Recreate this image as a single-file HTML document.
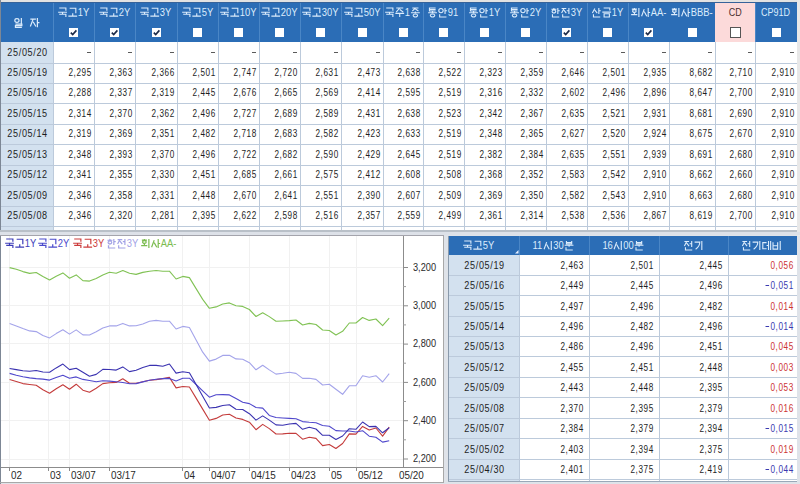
<!DOCTYPE html>
<html><head><meta charset="utf-8"><style>
html,body{margin:0;padding:0;width:800px;height:484px;overflow:hidden;background:#dcdcdc}
body{position:relative;font-family:"Liberation Sans",sans-serif;color:#1e1e1e}
body>div,body>svg{position:absolute}
.c{display:flex;align-items:center;white-space:nowrap;line-height:1;box-sizing:border-box}
.c span{display:inline-block}
</style></head><body>
<div style="left:0px;top:0px;width:800px;height:484px;background:#dfe3e9;"></div>
<div style="left:0px;top:0px;width:797px;height:2px;background:#e2e2e2;"></div>
<div style="left:0px;top:2px;width:797px;height:40px;background:#2b6db6;"></div>
<div style="left:0px;top:2px;width:797px;height:1px;background:#36639a;"></div>
<div style="left:715px;top:2.5px;width:40px;height:39.5px;background:#fcdada;"></div>
<div style="left:0px;top:42px;width:797px;height:188px;background:#ffffff;"></div>
<div style="left:0px;top:42px;width:53px;height:188px;background:#d3e1ef;"></div>
<div style="left:0px;top:62.55px;width:797px;height:1.0px;background:#bccadb;"></div>
<div style="left:0px;top:83.0px;width:797px;height:1.0px;background:#bccadb;"></div>
<div style="left:0px;top:103.44999999999999px;width:797px;height:1.0px;background:#bccadb;"></div>
<div style="left:0px;top:123.9px;width:797px;height:1.0px;background:#bccadb;"></div>
<div style="left:0px;top:144.35px;width:797px;height:1.0px;background:#bccadb;"></div>
<div style="left:0px;top:164.79999999999998px;width:797px;height:1.0px;background:#bccadb;"></div>
<div style="left:0px;top:185.25px;width:797px;height:1.0px;background:#bccadb;"></div>
<div style="left:0px;top:205.7px;width:797px;height:1.0px;background:#bccadb;"></div>
<div style="left:0px;top:226.14999999999998px;width:797px;height:1.0px;background:#bccadb;"></div>
<div style="left:53px;top:42px;width:1px;height:188px;background:#bccadb;"></div>
<div style="left:53px;top:2.5px;width:1px;height:39.5px;background:#4a86c6;"></div>
<div style="left:94px;top:42px;width:1px;height:188px;background:#bccadb;"></div>
<div style="left:94px;top:2.5px;width:1px;height:39.5px;background:#4a86c6;"></div>
<div style="left:135px;top:42px;width:1px;height:188px;background:#bccadb;"></div>
<div style="left:135px;top:2.5px;width:1px;height:39.5px;background:#4a86c6;"></div>
<div style="left:177px;top:42px;width:1px;height:188px;background:#bccadb;"></div>
<div style="left:177px;top:2.5px;width:1px;height:39.5px;background:#4a86c6;"></div>
<div style="left:218px;top:42px;width:1px;height:188px;background:#bccadb;"></div>
<div style="left:218px;top:2.5px;width:1px;height:39.5px;background:#4a86c6;"></div>
<div style="left:259px;top:42px;width:1px;height:188px;background:#bccadb;"></div>
<div style="left:259px;top:2.5px;width:1px;height:39.5px;background:#4a86c6;"></div>
<div style="left:300px;top:42px;width:1px;height:188px;background:#bccadb;"></div>
<div style="left:300px;top:2.5px;width:1px;height:39.5px;background:#4a86c6;"></div>
<div style="left:341px;top:42px;width:1px;height:188px;background:#bccadb;"></div>
<div style="left:341px;top:2.5px;width:1px;height:39.5px;background:#4a86c6;"></div>
<div style="left:383px;top:42px;width:1px;height:188px;background:#bccadb;"></div>
<div style="left:383px;top:2.5px;width:1px;height:39.5px;background:#4a86c6;"></div>
<div style="left:423px;top:42px;width:1px;height:188px;background:#bccadb;"></div>
<div style="left:423px;top:2.5px;width:1px;height:39.5px;background:#4a86c6;"></div>
<div style="left:464px;top:42px;width:1px;height:188px;background:#bccadb;"></div>
<div style="left:464px;top:2.5px;width:1px;height:39.5px;background:#4a86c6;"></div>
<div style="left:505px;top:42px;width:1px;height:188px;background:#bccadb;"></div>
<div style="left:505px;top:2.5px;width:1px;height:39.5px;background:#4a86c6;"></div>
<div style="left:546px;top:42px;width:1px;height:188px;background:#bccadb;"></div>
<div style="left:546px;top:2.5px;width:1px;height:39.5px;background:#4a86c6;"></div>
<div style="left:587px;top:42px;width:1px;height:188px;background:#bccadb;"></div>
<div style="left:587px;top:2.5px;width:1px;height:39.5px;background:#4a86c6;"></div>
<div style="left:628px;top:42px;width:1px;height:188px;background:#bccadb;"></div>
<div style="left:628px;top:2.5px;width:1px;height:39.5px;background:#4a86c6;"></div>
<div style="left:669px;top:42px;width:1px;height:188px;background:#bccadb;"></div>
<div style="left:715px;top:42px;width:1px;height:188px;background:#bccadb;"></div>
<div style="left:755px;top:42px;width:1px;height:188px;background:#bccadb;"></div>
<div style="left:755px;top:2.5px;width:1px;height:39.5px;background:#4a86c6;"></div>
<div style="left:797px;top:0px;width:3px;height:236px;background:#e8e8e8;"></div>
<div style="left:0px;top:0px;width:1px;height:230px;background:#7d8795;"></div>
<svg style="position:absolute;left:13.90px;top:17.70px;overflow:visible;color:#dcecfc" width="11.0" height="10.3" fill="none" stroke="currentColor" stroke-width="1.2" font-family="Liberation Sans, sans-serif"><path d="M0.82 2.42A2.1149999999999998 1.86 0 1 0 5.05 2.42A2.1149999999999998 1.86 0 1 0 0.82 2.42ZM7.34 0.00V5.95M1.44 6.14H7.86V7.720000000000001H1.44V9.3H7.86"/></svg>
<svg style="position:absolute;left:30.00px;top:17.70px;overflow:visible;color:#dcecfc" width="11.0" height="10.3" fill="none" stroke="currentColor" stroke-width="1.2" font-family="Liberation Sans, sans-serif"><path d="M0.34 1.12H5.89M3.1149999999999998 1.12L0.34 8.56M3.1149999999999998 3.724L5.89 8.56M7.39 0.00V9.30M7.39 4.65H9.46"/></svg>
<svg style="position:absolute;left:57.85px;top:8.40px;overflow:visible;color:#dcecfc" width="32.3" height="10.0" fill="none" stroke="currentColor" stroke-width="1.1" font-family="Liberation Sans, sans-serif"><path d="M1.2 0.0H7.88V2.7M0.14 4.23H8.94M4.54 4.23V5.76M1.2 6.3H7.88V9.0"/><path d="M11.66 0.27H17.82V5.22M10.34 8.10H19.14M14.74 5.22V8.10"/><text x="0" y="0" transform="translate(19.80 8.10) scale(0.84 1)" font-size="11.2" fill="currentColor" stroke="none">1Y</text></svg>
<div style="left:69.0px;top:28px;width:9px;height:9px;background:#fff"></div>
<svg style="position:absolute;left:69.0px;top:28px" width="9" height="9" viewBox="0 0 9 9"><path d="M1.8 4.6 L3.7 6.5 L7.4 2.4" stroke="#1c2a48" stroke-width="1.6" fill="none"/></svg>
<svg style="position:absolute;left:98.85px;top:8.40px;overflow:visible;color:#dcecfc" width="32.3" height="10.0" fill="none" stroke="currentColor" stroke-width="1.1" font-family="Liberation Sans, sans-serif"><path d="M1.2 0.0H7.88V2.7M0.14 4.23H8.94M4.54 4.23V5.76M1.2 6.3H7.88V9.0"/><path d="M11.66 0.27H17.82V5.22M10.34 8.10H19.14M14.74 5.22V8.10"/><text x="0" y="0" transform="translate(19.80 8.10) scale(0.84 1)" font-size="11.2" fill="currentColor" stroke="none">2Y</text></svg>
<div style="left:110.0px;top:28px;width:9px;height:9px;background:#fff"></div>
<svg style="position:absolute;left:110.0px;top:28px" width="9" height="9" viewBox="0 0 9 9"><path d="M1.8 4.6 L3.7 6.5 L7.4 2.4" stroke="#1c2a48" stroke-width="1.6" fill="none"/></svg>
<svg style="position:absolute;left:140.35px;top:8.40px;overflow:visible;color:#dcecfc" width="32.3" height="10.0" fill="none" stroke="currentColor" stroke-width="1.1" font-family="Liberation Sans, sans-serif"><path d="M1.2 0.0H7.88V2.7M0.14 4.23H8.94M4.54 4.23V5.76M1.2 6.3H7.88V9.0"/><path d="M11.66 0.27H17.82V5.22M10.34 8.10H19.14M14.74 5.22V8.10"/><text x="0" y="0" transform="translate(19.80 8.10) scale(0.84 1)" font-size="11.2" fill="currentColor" stroke="none">3Y</text></svg>
<div style="left:151.5px;top:28px;width:9px;height:9px;background:#fff"></div>
<svg style="position:absolute;left:151.5px;top:28px" width="9" height="9" viewBox="0 0 9 9"><path d="M1.8 4.6 L3.7 6.5 L7.4 2.4" stroke="#1c2a48" stroke-width="1.6" fill="none"/></svg>
<svg style="position:absolute;left:181.85px;top:8.40px;overflow:visible;color:#dcecfc" width="32.3" height="10.0" fill="none" stroke="currentColor" stroke-width="1.1" font-family="Liberation Sans, sans-serif"><path d="M1.2 0.0H7.88V2.7M0.14 4.23H8.94M4.54 4.23V5.76M1.2 6.3H7.88V9.0"/><path d="M11.66 0.27H17.82V5.22M10.34 8.10H19.14M14.74 5.22V8.10"/><text x="0" y="0" transform="translate(19.80 8.10) scale(0.84 1)" font-size="11.2" fill="currentColor" stroke="none">5Y</text></svg>
<div style="left:193.0px;top:28px;width:9px;height:9px;background:#fff"></div>
<svg style="position:absolute;left:220.23px;top:8.40px;overflow:visible;color:#dcecfc" width="37.5" height="10.0" fill="none" stroke="currentColor" stroke-width="1.1" font-family="Liberation Sans, sans-serif"><path d="M1.2 0.0H7.88V2.7M0.14 4.23H8.94M4.54 4.23V5.76M1.2 6.3H7.88V9.0"/><path d="M11.66 0.27H17.82V5.22M10.34 8.10H19.14M14.74 5.22V8.10"/><text x="0" y="0" transform="translate(19.80 8.10) scale(0.84 1)" font-size="11.2" fill="currentColor" stroke="none">10Y</text></svg>
<div style="left:234.0px;top:28px;width:9px;height:9px;background:#fff"></div>
<svg style="position:absolute;left:261.23px;top:8.40px;overflow:visible;color:#dcecfc" width="37.5" height="10.0" fill="none" stroke="currentColor" stroke-width="1.1" font-family="Liberation Sans, sans-serif"><path d="M1.2 0.0H7.88V2.7M0.14 4.23H8.94M4.54 4.23V5.76M1.2 6.3H7.88V9.0"/><path d="M11.66 0.27H17.82V5.22M10.34 8.10H19.14M14.74 5.22V8.10"/><text x="0" y="0" transform="translate(19.80 8.10) scale(0.84 1)" font-size="11.2" fill="currentColor" stroke="none">20Y</text></svg>
<div style="left:275.0px;top:28px;width:9px;height:9px;background:#fff"></div>
<svg style="position:absolute;left:302.23px;top:8.40px;overflow:visible;color:#dcecfc" width="37.5" height="10.0" fill="none" stroke="currentColor" stroke-width="1.1" font-family="Liberation Sans, sans-serif"><path d="M1.2 0.0H7.88V2.7M0.14 4.23H8.94M4.54 4.23V5.76M1.2 6.3H7.88V9.0"/><path d="M11.66 0.27H17.82V5.22M10.34 8.10H19.14M14.74 5.22V8.10"/><text x="0" y="0" transform="translate(19.80 8.10) scale(0.84 1)" font-size="11.2" fill="currentColor" stroke="none">30Y</text></svg>
<div style="left:316.0px;top:28px;width:9px;height:9px;background:#fff"></div>
<svg style="position:absolute;left:343.73px;top:8.40px;overflow:visible;color:#dcecfc" width="37.5" height="10.0" fill="none" stroke="currentColor" stroke-width="1.1" font-family="Liberation Sans, sans-serif"><path d="M1.2 0.0H7.88V2.7M0.14 4.23H8.94M4.54 4.23V5.76M1.2 6.3H7.88V9.0"/><path d="M11.66 0.27H17.82V5.22M10.34 8.10H19.14M14.74 5.22V8.10"/><text x="0" y="0" transform="translate(19.80 8.10) scale(0.84 1)" font-size="11.2" fill="currentColor" stroke="none">50Y</text></svg>
<div style="left:357.5px;top:28px;width:9px;height:9px;background:#fff"></div>
<svg style="position:absolute;left:384.98px;top:8.40px;overflow:visible;color:#dcecfc" width="37.0" height="10.0" fill="none" stroke="currentColor" stroke-width="1.1" font-family="Liberation Sans, sans-serif"><path d="M1.2 0.0H7.88V2.7M0.14 4.23H8.94M4.54 4.23V5.76M1.2 6.3H7.88V9.0"/><path d="M11.22 0.0H18.26M14.740000000000002 0.0L11.22 4.14M14.740000000000002 1.4489999999999998L18.26 4.14M10.34 5.40H19.14M14.74 5.40V9.00"/><text x="0" y="0" transform="translate(19.80 8.10) scale(0.84 1)" font-size="11.2" fill="currentColor" stroke="none">1</text><path d="M27.29 0.0H33.45M30.37 0.0L27.29 3.06M30.37 1.071L33.45 3.06M25.97 4.68H34.77M30.37 3.42V4.68M28.17 7.470000000000001A2.1999999999999993 1.5299999999999998 0 1 0 32.57 7.470000000000001A2.1999999999999993 1.5299999999999998 0 1 0 28.17 7.470000000000001Z"/></svg>
<div style="left:398.5px;top:28px;width:9px;height:9px;background:#fff"></div>
<svg style="position:absolute;left:428.37px;top:8.40px;overflow:visible;color:#dcecfc" width="31.3" height="10.0" fill="none" stroke="currentColor" stroke-width="1.1" font-family="Liberation Sans, sans-serif"><path d="M7.62 0.0H1.46V3.06H7.62M1.46 1.53H7.62M0.14 4.68H8.94M4.54 3.42V4.68M2.34 7.470000000000001A2.2 1.5299999999999998 0 1 0 6.74 7.470000000000001A2.2 1.5299999999999998 0 1 0 2.34 7.470000000000001Z"/><path d="M10.78 2.565A2.2 2.1149999999999998 0 1 0 15.18 2.565A2.2 2.1149999999999998 0 1 0 10.78 2.565ZM17.03 0.00V5.94M17.03 2.70H18.96M11.66 6.3V9.0H18.44"/><text x="0" y="0" transform="translate(19.80 8.10) scale(0.84 1)" font-size="11.2" fill="currentColor" stroke="none">91</text></svg>
<div style="left:439.0px;top:28px;width:9px;height:9px;background:#fff"></div>
<svg style="position:absolute;left:468.85px;top:8.40px;overflow:visible;color:#dcecfc" width="32.3" height="10.0" fill="none" stroke="currentColor" stroke-width="1.1" font-family="Liberation Sans, sans-serif"><path d="M7.62 0.0H1.46V3.06H7.62M1.46 1.53H7.62M0.14 4.68H8.94M4.54 3.42V4.68M2.34 7.470000000000001A2.2 1.5299999999999998 0 1 0 6.74 7.470000000000001A2.2 1.5299999999999998 0 1 0 2.34 7.470000000000001Z"/><path d="M10.78 2.565A2.2 2.1149999999999998 0 1 0 15.18 2.565A2.2 2.1149999999999998 0 1 0 10.78 2.565ZM17.03 0.00V5.94M17.03 2.70H18.96M11.66 6.3V9.0H18.44"/><text x="0" y="0" transform="translate(19.80 8.10) scale(0.84 1)" font-size="11.2" fill="currentColor" stroke="none">1Y</text></svg>
<div style="left:480.0px;top:28px;width:9px;height:9px;background:#fff"></div>
<svg style="position:absolute;left:509.85px;top:8.40px;overflow:visible;color:#dcecfc" width="32.3" height="10.0" fill="none" stroke="currentColor" stroke-width="1.1" font-family="Liberation Sans, sans-serif"><path d="M7.62 0.0H1.46V3.06H7.62M1.46 1.53H7.62M0.14 4.68H8.94M4.54 3.42V4.68M2.34 7.470000000000001A2.2 1.5299999999999998 0 1 0 6.74 7.470000000000001A2.2 1.5299999999999998 0 1 0 2.34 7.470000000000001Z"/><path d="M10.78 2.565A2.2 2.1149999999999998 0 1 0 15.18 2.565A2.2 2.1149999999999998 0 1 0 10.78 2.565ZM17.03 0.00V5.94M17.03 2.70H18.96M11.66 6.3V9.0H18.44"/><text x="0" y="0" transform="translate(19.80 8.10) scale(0.84 1)" font-size="11.2" fill="currentColor" stroke="none">2Y</text></svg>
<div style="left:521.0px;top:28px;width:9px;height:9px;background:#fff"></div>
<svg style="position:absolute;left:550.85px;top:8.40px;overflow:visible;color:#dcecfc" width="32.3" height="10.0" fill="none" stroke="currentColor" stroke-width="1.1" font-family="Liberation Sans, sans-serif"><path d="M2.91 0.0V0.9072M0.4 1.26H5.42M1.1028000000000004 3.4272000000000005A1.8071999999999997 1.512 0 1 0 4.7172 3.4272000000000005A1.8071999999999997 1.512 0 1 0 1.1028000000000004 3.4272000000000005ZM6.83 0.00V5.94M6.83 2.70H8.76M1.46 6.3V9.0H8.24"/><path d="M10.6 0.54H15.27M12.934999999999999 0.54L10.6 5.04M12.934999999999999 2.115L15.27 5.04M17.91 0.00V5.94M15.80 2.70H17.91M11.66 6.3V9.0H18.44"/><text x="0" y="0" transform="translate(19.80 8.10) scale(0.84 1)" font-size="11.2" fill="currentColor" stroke="none">3Y</text></svg>
<div style="left:562.0px;top:28px;width:9px;height:9px;background:#fff"></div>
<svg style="position:absolute;left:562.0px;top:28px" width="9" height="9" viewBox="0 0 9 9"><path d="M1.8 4.6 L3.7 6.5 L7.4 2.4" stroke="#1c2a48" stroke-width="1.6" fill="none"/></svg>
<svg style="position:absolute;left:591.85px;top:8.40px;overflow:visible;color:#dcecfc" width="32.3" height="10.0" fill="none" stroke="currentColor" stroke-width="1.1" font-family="Liberation Sans, sans-serif"><path d="M2.8200000000000003 0.54L0.4 5.04M2.8200000000000003 2.115L5.24 5.04M6.83 0.00V5.94M6.83 2.70H8.76M1.46 6.3V9.0H8.24"/><path d="M11.66 0.0H17.82V2.52M10.34 4.14H19.14M12.1 5.76H17.38V9.0H12.1Z"/><text x="0" y="0" transform="translate(19.80 8.10) scale(0.84 1)" font-size="11.2" fill="currentColor" stroke="none">1Y</text></svg>
<div style="left:603.0px;top:28px;width:9px;height:9px;background:#fff"></div>
<svg style="position:absolute;left:630.76px;top:8.40px;overflow:visible;color:#dcecfc" width="36.5" height="10.0" fill="none" stroke="currentColor" stroke-width="1.1" font-family="Liberation Sans, sans-serif"><path d="M3.395 0.0V0.8099999999999999M0.84 1.125H5.95M1.5554 3.06A1.8396000000000001 1.3499999999999999 0 1 0 5.2346 3.06A1.8396000000000001 1.3499999999999999 0 1 0 1.5554 3.06ZM0.14 6.66H6.30M3.40 5.04V6.66M7.88 0.00V9.00"/><path d="M13.2 1.08L10.6 8.28M13.2 3.5999999999999996L15.8 8.28M17.20 0.00V9.00M17.20 4.50H19.14"/><text x="0" y="0" transform="translate(19.80 8.10) scale(0.84 1)" font-size="11.2" fill="currentColor" stroke="none">AA-</text></svg>
<div style="left:644.0px;top:28px;width:9px;height:9px;background:#fff"></div>
<svg style="position:absolute;left:644.0px;top:28px" width="9" height="9" viewBox="0 0 9 9"><path d="M1.8 4.6 L3.7 6.5 L7.4 2.4" stroke="#1c2a48" stroke-width="1.6" fill="none"/></svg>
<svg style="position:absolute;left:671.12px;top:8.40px;overflow:visible;color:#dcecfc" width="42.8" height="10.0" fill="none" stroke="currentColor" stroke-width="1.1" font-family="Liberation Sans, sans-serif"><path d="M3.395 0.0V0.8099999999999999M0.84 1.125H5.95M1.5554 3.06A1.8396000000000001 1.3499999999999999 0 1 0 5.2346 3.06A1.8396000000000001 1.3499999999999999 0 1 0 1.5554 3.06ZM0.14 6.66H6.30M3.40 5.04V6.66M7.88 0.00V9.00"/><path d="M13.2 1.08L10.6 8.28M13.2 3.5999999999999996L15.8 8.28M17.20 0.00V9.00M17.20 4.50H19.14"/><text x="0" y="0" transform="translate(19.80 8.10) scale(0.84 1)" font-size="11.2" fill="currentColor" stroke="none">BBB-</text></svg>
<div style="left:687.5px;top:28px;width:9px;height:9px;background:#fff"></div>
<div class="c" style="left:715px;top:4px;width:40px;height:18px;justify-content:center;color:#4a3030;font-size:11.5px;"><span style="transform-origin:50% 50%;transform:scaleX(0.78);">CD</span></div>
<div style="left:730.0px;top:27px;width:9px;height:9px;background:#fff;border:1px solid #555"></div>
<div class="c" style="left:755px;top:4px;width:42px;height:18px;justify-content:center;color:#dcecfc;font-size:11.5px;"><span style="transform-origin:50% 50%;transform:scaleX(0.78);">CP91D</span></div>
<div style="left:771.5px;top:28px;width:9px;height:9px;background:#fff"></div>
<div class="c" style="left:1px;top:42.1px;width:53px;height:20.449999999999996px;justify-content:center;font-size:11.5px;"><span style="transform-origin:50% 50%;transform:scaleX(0.79);letter-spacing:0.8px;">25/05/20</span></div>
<div style="left:86.5px;top:52px;width:4.0px;height:1.3999999999999986px;background:#5a5a5a;"></div>
<div style="left:127.5px;top:52px;width:4.0px;height:1.3999999999999986px;background:#5a5a5a;"></div>
<div style="left:169.5px;top:52px;width:4.0px;height:1.3999999999999986px;background:#5a5a5a;"></div>
<div style="left:210.5px;top:52px;width:4.0px;height:1.3999999999999986px;background:#5a5a5a;"></div>
<div style="left:251.5px;top:52px;width:4.0px;height:1.3999999999999986px;background:#5a5a5a;"></div>
<div style="left:292.5px;top:52px;width:4.0px;height:1.3999999999999986px;background:#5a5a5a;"></div>
<div style="left:333.5px;top:52px;width:4.0px;height:1.3999999999999986px;background:#5a5a5a;"></div>
<div style="left:375.5px;top:52px;width:4.0px;height:1.3999999999999986px;background:#5a5a5a;"></div>
<div style="left:415.5px;top:52px;width:4.0px;height:1.3999999999999986px;background:#5a5a5a;"></div>
<div style="left:456.5px;top:52px;width:4.0px;height:1.3999999999999986px;background:#5a5a5a;"></div>
<div style="left:497.5px;top:52px;width:4.0px;height:1.3999999999999986px;background:#5a5a5a;"></div>
<div style="left:538.5px;top:52px;width:4.0px;height:1.3999999999999986px;background:#5a5a5a;"></div>
<div style="left:579.5px;top:52px;width:4.0px;height:1.3999999999999986px;background:#5a5a5a;"></div>
<div style="left:620.5px;top:52px;width:4.0px;height:1.3999999999999986px;background:#5a5a5a;"></div>
<div style="left:661.5px;top:52px;width:4.0px;height:1.3999999999999986px;background:#5a5a5a;"></div>
<div style="left:707.5px;top:52px;width:4.0px;height:1.3999999999999986px;background:#5a5a5a;"></div>
<div style="left:747.5px;top:52px;width:4.0px;height:1.3999999999999986px;background:#5a5a5a;"></div>
<div style="left:789.5px;top:52px;width:4.0px;height:1.3999999999999986px;background:#5a5a5a;"></div>
<div class="c" style="left:1px;top:62.55px;width:53px;height:20.450000000000003px;justify-content:center;font-size:11.5px;"><span style="transform-origin:50% 50%;transform:scaleX(0.79);letter-spacing:0.8px;">25/05/19</span></div>
<div class="c" style="left:53px;top:62.55px;width:41px;height:20.450000000000003px;justify-content:flex-end;padding-right:2.43px;font-size:11.5px;"><span style="transform-origin:100% 50%;transform:scaleX(0.71);letter-spacing:0.8px;">2,295</span></div>
<div class="c" style="left:94px;top:62.55px;width:41px;height:20.450000000000003px;justify-content:flex-end;padding-right:2.43px;font-size:11.5px;"><span style="transform-origin:100% 50%;transform:scaleX(0.71);letter-spacing:0.8px;">2,363</span></div>
<div class="c" style="left:135px;top:62.55px;width:42px;height:20.450000000000003px;justify-content:flex-end;padding-right:2.43px;font-size:11.5px;"><span style="transform-origin:100% 50%;transform:scaleX(0.71);letter-spacing:0.8px;">2,366</span></div>
<div class="c" style="left:177px;top:62.55px;width:41px;height:20.450000000000003px;justify-content:flex-end;padding-right:2.43px;font-size:11.5px;"><span style="transform-origin:100% 50%;transform:scaleX(0.71);letter-spacing:0.8px;">2,501</span></div>
<div class="c" style="left:218px;top:62.55px;width:41px;height:20.450000000000003px;justify-content:flex-end;padding-right:2.43px;font-size:11.5px;"><span style="transform-origin:100% 50%;transform:scaleX(0.71);letter-spacing:0.8px;">2,747</span></div>
<div class="c" style="left:259px;top:62.55px;width:41px;height:20.450000000000003px;justify-content:flex-end;padding-right:2.43px;font-size:11.5px;"><span style="transform-origin:100% 50%;transform:scaleX(0.71);letter-spacing:0.8px;">2,720</span></div>
<div class="c" style="left:300px;top:62.55px;width:41px;height:20.450000000000003px;justify-content:flex-end;padding-right:2.43px;font-size:11.5px;"><span style="transform-origin:100% 50%;transform:scaleX(0.71);letter-spacing:0.8px;">2,631</span></div>
<div class="c" style="left:341px;top:62.55px;width:42px;height:20.450000000000003px;justify-content:flex-end;padding-right:2.43px;font-size:11.5px;"><span style="transform-origin:100% 50%;transform:scaleX(0.71);letter-spacing:0.8px;">2,473</span></div>
<div class="c" style="left:383px;top:62.55px;width:40px;height:20.450000000000003px;justify-content:flex-end;padding-right:2.43px;font-size:11.5px;"><span style="transform-origin:100% 50%;transform:scaleX(0.71);letter-spacing:0.8px;">2,638</span></div>
<div class="c" style="left:423px;top:62.55px;width:41px;height:20.450000000000003px;justify-content:flex-end;padding-right:2.43px;font-size:11.5px;"><span style="transform-origin:100% 50%;transform:scaleX(0.71);letter-spacing:0.8px;">2,522</span></div>
<div class="c" style="left:464px;top:62.55px;width:41px;height:20.450000000000003px;justify-content:flex-end;padding-right:2.43px;font-size:11.5px;"><span style="transform-origin:100% 50%;transform:scaleX(0.71);letter-spacing:0.8px;">2,323</span></div>
<div class="c" style="left:505px;top:62.55px;width:41px;height:20.450000000000003px;justify-content:flex-end;padding-right:2.43px;font-size:11.5px;"><span style="transform-origin:100% 50%;transform:scaleX(0.71);letter-spacing:0.8px;">2,359</span></div>
<div class="c" style="left:546px;top:62.55px;width:41px;height:20.450000000000003px;justify-content:flex-end;padding-right:2.43px;font-size:11.5px;"><span style="transform-origin:100% 50%;transform:scaleX(0.71);letter-spacing:0.8px;">2,646</span></div>
<div class="c" style="left:587px;top:62.55px;width:41px;height:20.450000000000003px;justify-content:flex-end;padding-right:2.43px;font-size:11.5px;"><span style="transform-origin:100% 50%;transform:scaleX(0.71);letter-spacing:0.8px;">2,501</span></div>
<div class="c" style="left:628px;top:62.55px;width:41px;height:20.450000000000003px;justify-content:flex-end;padding-right:2.43px;font-size:11.5px;"><span style="transform-origin:100% 50%;transform:scaleX(0.71);letter-spacing:0.8px;">2,935</span></div>
<div class="c" style="left:669px;top:62.55px;width:46px;height:20.450000000000003px;justify-content:flex-end;padding-right:2.43px;font-size:11.5px;"><span style="transform-origin:100% 50%;transform:scaleX(0.71);letter-spacing:0.8px;">8,682</span></div>
<div class="c" style="left:715px;top:62.55px;width:40px;height:20.450000000000003px;justify-content:flex-end;padding-right:2.43px;font-size:11.5px;"><span style="transform-origin:100% 50%;transform:scaleX(0.71);letter-spacing:0.8px;">2,710</span></div>
<div class="c" style="left:755px;top:62.55px;width:42px;height:20.450000000000003px;justify-content:flex-end;padding-right:2.43px;font-size:11.5px;"><span style="transform-origin:100% 50%;transform:scaleX(0.71);letter-spacing:0.8px;">2,910</span></div>
<div class="c" style="left:1px;top:83.0px;width:53px;height:20.450000000000003px;justify-content:center;font-size:11.5px;"><span style="transform-origin:50% 50%;transform:scaleX(0.79);letter-spacing:0.8px;">25/05/16</span></div>
<div class="c" style="left:53px;top:83.0px;width:41px;height:20.450000000000003px;justify-content:flex-end;padding-right:2.43px;font-size:11.5px;"><span style="transform-origin:100% 50%;transform:scaleX(0.71);letter-spacing:0.8px;">2,288</span></div>
<div class="c" style="left:94px;top:83.0px;width:41px;height:20.450000000000003px;justify-content:flex-end;padding-right:2.43px;font-size:11.5px;"><span style="transform-origin:100% 50%;transform:scaleX(0.71);letter-spacing:0.8px;">2,337</span></div>
<div class="c" style="left:135px;top:83.0px;width:42px;height:20.450000000000003px;justify-content:flex-end;padding-right:2.43px;font-size:11.5px;"><span style="transform-origin:100% 50%;transform:scaleX(0.71);letter-spacing:0.8px;">2,319</span></div>
<div class="c" style="left:177px;top:83.0px;width:41px;height:20.450000000000003px;justify-content:flex-end;padding-right:2.43px;font-size:11.5px;"><span style="transform-origin:100% 50%;transform:scaleX(0.71);letter-spacing:0.8px;">2,445</span></div>
<div class="c" style="left:218px;top:83.0px;width:41px;height:20.450000000000003px;justify-content:flex-end;padding-right:2.43px;font-size:11.5px;"><span style="transform-origin:100% 50%;transform:scaleX(0.71);letter-spacing:0.8px;">2,676</span></div>
<div class="c" style="left:259px;top:83.0px;width:41px;height:20.450000000000003px;justify-content:flex-end;padding-right:2.43px;font-size:11.5px;"><span style="transform-origin:100% 50%;transform:scaleX(0.71);letter-spacing:0.8px;">2,665</span></div>
<div class="c" style="left:300px;top:83.0px;width:41px;height:20.450000000000003px;justify-content:flex-end;padding-right:2.43px;font-size:11.5px;"><span style="transform-origin:100% 50%;transform:scaleX(0.71);letter-spacing:0.8px;">2,569</span></div>
<div class="c" style="left:341px;top:83.0px;width:42px;height:20.450000000000003px;justify-content:flex-end;padding-right:2.43px;font-size:11.5px;"><span style="transform-origin:100% 50%;transform:scaleX(0.71);letter-spacing:0.8px;">2,414</span></div>
<div class="c" style="left:383px;top:83.0px;width:40px;height:20.450000000000003px;justify-content:flex-end;padding-right:2.43px;font-size:11.5px;"><span style="transform-origin:100% 50%;transform:scaleX(0.71);letter-spacing:0.8px;">2,595</span></div>
<div class="c" style="left:423px;top:83.0px;width:41px;height:20.450000000000003px;justify-content:flex-end;padding-right:2.43px;font-size:11.5px;"><span style="transform-origin:100% 50%;transform:scaleX(0.71);letter-spacing:0.8px;">2,519</span></div>
<div class="c" style="left:464px;top:83.0px;width:41px;height:20.450000000000003px;justify-content:flex-end;padding-right:2.43px;font-size:11.5px;"><span style="transform-origin:100% 50%;transform:scaleX(0.71);letter-spacing:0.8px;">2,316</span></div>
<div class="c" style="left:505px;top:83.0px;width:41px;height:20.450000000000003px;justify-content:flex-end;padding-right:2.43px;font-size:11.5px;"><span style="transform-origin:100% 50%;transform:scaleX(0.71);letter-spacing:0.8px;">2,332</span></div>
<div class="c" style="left:546px;top:83.0px;width:41px;height:20.450000000000003px;justify-content:flex-end;padding-right:2.43px;font-size:11.5px;"><span style="transform-origin:100% 50%;transform:scaleX(0.71);letter-spacing:0.8px;">2,602</span></div>
<div class="c" style="left:587px;top:83.0px;width:41px;height:20.450000000000003px;justify-content:flex-end;padding-right:2.43px;font-size:11.5px;"><span style="transform-origin:100% 50%;transform:scaleX(0.71);letter-spacing:0.8px;">2,496</span></div>
<div class="c" style="left:628px;top:83.0px;width:41px;height:20.450000000000003px;justify-content:flex-end;padding-right:2.43px;font-size:11.5px;"><span style="transform-origin:100% 50%;transform:scaleX(0.71);letter-spacing:0.8px;">2,896</span></div>
<div class="c" style="left:669px;top:83.0px;width:46px;height:20.450000000000003px;justify-content:flex-end;padding-right:2.43px;font-size:11.5px;"><span style="transform-origin:100% 50%;transform:scaleX(0.71);letter-spacing:0.8px;">8,647</span></div>
<div class="c" style="left:715px;top:83.0px;width:40px;height:20.450000000000003px;justify-content:flex-end;padding-right:2.43px;font-size:11.5px;"><span style="transform-origin:100% 50%;transform:scaleX(0.71);letter-spacing:0.8px;">2,700</span></div>
<div class="c" style="left:755px;top:83.0px;width:42px;height:20.450000000000003px;justify-content:flex-end;padding-right:2.43px;font-size:11.5px;"><span style="transform-origin:100% 50%;transform:scaleX(0.71);letter-spacing:0.8px;">2,910</span></div>
<div class="c" style="left:1px;top:103.44999999999999px;width:53px;height:20.450000000000003px;justify-content:center;font-size:11.5px;"><span style="transform-origin:50% 50%;transform:scaleX(0.79);letter-spacing:0.8px;">25/05/15</span></div>
<div class="c" style="left:53px;top:103.44999999999999px;width:41px;height:20.450000000000003px;justify-content:flex-end;padding-right:2.43px;font-size:11.5px;"><span style="transform-origin:100% 50%;transform:scaleX(0.71);letter-spacing:0.8px;">2,314</span></div>
<div class="c" style="left:94px;top:103.44999999999999px;width:41px;height:20.450000000000003px;justify-content:flex-end;padding-right:2.43px;font-size:11.5px;"><span style="transform-origin:100% 50%;transform:scaleX(0.71);letter-spacing:0.8px;">2,370</span></div>
<div class="c" style="left:135px;top:103.44999999999999px;width:42px;height:20.450000000000003px;justify-content:flex-end;padding-right:2.43px;font-size:11.5px;"><span style="transform-origin:100% 50%;transform:scaleX(0.71);letter-spacing:0.8px;">2,362</span></div>
<div class="c" style="left:177px;top:103.44999999999999px;width:41px;height:20.450000000000003px;justify-content:flex-end;padding-right:2.43px;font-size:11.5px;"><span style="transform-origin:100% 50%;transform:scaleX(0.71);letter-spacing:0.8px;">2,496</span></div>
<div class="c" style="left:218px;top:103.44999999999999px;width:41px;height:20.450000000000003px;justify-content:flex-end;padding-right:2.43px;font-size:11.5px;"><span style="transform-origin:100% 50%;transform:scaleX(0.71);letter-spacing:0.8px;">2,727</span></div>
<div class="c" style="left:259px;top:103.44999999999999px;width:41px;height:20.450000000000003px;justify-content:flex-end;padding-right:2.43px;font-size:11.5px;"><span style="transform-origin:100% 50%;transform:scaleX(0.71);letter-spacing:0.8px;">2,689</span></div>
<div class="c" style="left:300px;top:103.44999999999999px;width:41px;height:20.450000000000003px;justify-content:flex-end;padding-right:2.43px;font-size:11.5px;"><span style="transform-origin:100% 50%;transform:scaleX(0.71);letter-spacing:0.8px;">2,589</span></div>
<div class="c" style="left:341px;top:103.44999999999999px;width:42px;height:20.450000000000003px;justify-content:flex-end;padding-right:2.43px;font-size:11.5px;"><span style="transform-origin:100% 50%;transform:scaleX(0.71);letter-spacing:0.8px;">2,431</span></div>
<div class="c" style="left:383px;top:103.44999999999999px;width:40px;height:20.450000000000003px;justify-content:flex-end;padding-right:2.43px;font-size:11.5px;"><span style="transform-origin:100% 50%;transform:scaleX(0.71);letter-spacing:0.8px;">2,638</span></div>
<div class="c" style="left:423px;top:103.44999999999999px;width:41px;height:20.450000000000003px;justify-content:flex-end;padding-right:2.43px;font-size:11.5px;"><span style="transform-origin:100% 50%;transform:scaleX(0.71);letter-spacing:0.8px;">2,523</span></div>
<div class="c" style="left:464px;top:103.44999999999999px;width:41px;height:20.450000000000003px;justify-content:flex-end;padding-right:2.43px;font-size:11.5px;"><span style="transform-origin:100% 50%;transform:scaleX(0.71);letter-spacing:0.8px;">2,342</span></div>
<div class="c" style="left:505px;top:103.44999999999999px;width:41px;height:20.450000000000003px;justify-content:flex-end;padding-right:2.43px;font-size:11.5px;"><span style="transform-origin:100% 50%;transform:scaleX(0.71);letter-spacing:0.8px;">2,367</span></div>
<div class="c" style="left:546px;top:103.44999999999999px;width:41px;height:20.450000000000003px;justify-content:flex-end;padding-right:2.43px;font-size:11.5px;"><span style="transform-origin:100% 50%;transform:scaleX(0.71);letter-spacing:0.8px;">2,635</span></div>
<div class="c" style="left:587px;top:103.44999999999999px;width:41px;height:20.450000000000003px;justify-content:flex-end;padding-right:2.43px;font-size:11.5px;"><span style="transform-origin:100% 50%;transform:scaleX(0.71);letter-spacing:0.8px;">2,521</span></div>
<div class="c" style="left:628px;top:103.44999999999999px;width:41px;height:20.450000000000003px;justify-content:flex-end;padding-right:2.43px;font-size:11.5px;"><span style="transform-origin:100% 50%;transform:scaleX(0.71);letter-spacing:0.8px;">2,931</span></div>
<div class="c" style="left:669px;top:103.44999999999999px;width:46px;height:20.450000000000003px;justify-content:flex-end;padding-right:2.43px;font-size:11.5px;"><span style="transform-origin:100% 50%;transform:scaleX(0.71);letter-spacing:0.8px;">8,681</span></div>
<div class="c" style="left:715px;top:103.44999999999999px;width:40px;height:20.450000000000003px;justify-content:flex-end;padding-right:2.43px;font-size:11.5px;"><span style="transform-origin:100% 50%;transform:scaleX(0.71);letter-spacing:0.8px;">2,690</span></div>
<div class="c" style="left:755px;top:103.44999999999999px;width:42px;height:20.450000000000003px;justify-content:flex-end;padding-right:2.43px;font-size:11.5px;"><span style="transform-origin:100% 50%;transform:scaleX(0.71);letter-spacing:0.8px;">2,910</span></div>
<div class="c" style="left:1px;top:123.9px;width:53px;height:20.44999999999999px;justify-content:center;font-size:11.5px;"><span style="transform-origin:50% 50%;transform:scaleX(0.79);letter-spacing:0.8px;">25/05/14</span></div>
<div class="c" style="left:53px;top:123.9px;width:41px;height:20.44999999999999px;justify-content:flex-end;padding-right:2.43px;font-size:11.5px;"><span style="transform-origin:100% 50%;transform:scaleX(0.71);letter-spacing:0.8px;">2,319</span></div>
<div class="c" style="left:94px;top:123.9px;width:41px;height:20.44999999999999px;justify-content:flex-end;padding-right:2.43px;font-size:11.5px;"><span style="transform-origin:100% 50%;transform:scaleX(0.71);letter-spacing:0.8px;">2,369</span></div>
<div class="c" style="left:135px;top:123.9px;width:42px;height:20.44999999999999px;justify-content:flex-end;padding-right:2.43px;font-size:11.5px;"><span style="transform-origin:100% 50%;transform:scaleX(0.71);letter-spacing:0.8px;">2,351</span></div>
<div class="c" style="left:177px;top:123.9px;width:41px;height:20.44999999999999px;justify-content:flex-end;padding-right:2.43px;font-size:11.5px;"><span style="transform-origin:100% 50%;transform:scaleX(0.71);letter-spacing:0.8px;">2,482</span></div>
<div class="c" style="left:218px;top:123.9px;width:41px;height:20.44999999999999px;justify-content:flex-end;padding-right:2.43px;font-size:11.5px;"><span style="transform-origin:100% 50%;transform:scaleX(0.71);letter-spacing:0.8px;">2,718</span></div>
<div class="c" style="left:259px;top:123.9px;width:41px;height:20.44999999999999px;justify-content:flex-end;padding-right:2.43px;font-size:11.5px;"><span style="transform-origin:100% 50%;transform:scaleX(0.71);letter-spacing:0.8px;">2,683</span></div>
<div class="c" style="left:300px;top:123.9px;width:41px;height:20.44999999999999px;justify-content:flex-end;padding-right:2.43px;font-size:11.5px;"><span style="transform-origin:100% 50%;transform:scaleX(0.71);letter-spacing:0.8px;">2,582</span></div>
<div class="c" style="left:341px;top:123.9px;width:42px;height:20.44999999999999px;justify-content:flex-end;padding-right:2.43px;font-size:11.5px;"><span style="transform-origin:100% 50%;transform:scaleX(0.71);letter-spacing:0.8px;">2,423</span></div>
<div class="c" style="left:383px;top:123.9px;width:40px;height:20.44999999999999px;justify-content:flex-end;padding-right:2.43px;font-size:11.5px;"><span style="transform-origin:100% 50%;transform:scaleX(0.71);letter-spacing:0.8px;">2,633</span></div>
<div class="c" style="left:423px;top:123.9px;width:41px;height:20.44999999999999px;justify-content:flex-end;padding-right:2.43px;font-size:11.5px;"><span style="transform-origin:100% 50%;transform:scaleX(0.71);letter-spacing:0.8px;">2,519</span></div>
<div class="c" style="left:464px;top:123.9px;width:41px;height:20.44999999999999px;justify-content:flex-end;padding-right:2.43px;font-size:11.5px;"><span style="transform-origin:100% 50%;transform:scaleX(0.71);letter-spacing:0.8px;">2,348</span></div>
<div class="c" style="left:505px;top:123.9px;width:41px;height:20.44999999999999px;justify-content:flex-end;padding-right:2.43px;font-size:11.5px;"><span style="transform-origin:100% 50%;transform:scaleX(0.71);letter-spacing:0.8px;">2,365</span></div>
<div class="c" style="left:546px;top:123.9px;width:41px;height:20.44999999999999px;justify-content:flex-end;padding-right:2.43px;font-size:11.5px;"><span style="transform-origin:100% 50%;transform:scaleX(0.71);letter-spacing:0.8px;">2,627</span></div>
<div class="c" style="left:587px;top:123.9px;width:41px;height:20.44999999999999px;justify-content:flex-end;padding-right:2.43px;font-size:11.5px;"><span style="transform-origin:100% 50%;transform:scaleX(0.71);letter-spacing:0.8px;">2,520</span></div>
<div class="c" style="left:628px;top:123.9px;width:41px;height:20.44999999999999px;justify-content:flex-end;padding-right:2.43px;font-size:11.5px;"><span style="transform-origin:100% 50%;transform:scaleX(0.71);letter-spacing:0.8px;">2,924</span></div>
<div class="c" style="left:669px;top:123.9px;width:46px;height:20.44999999999999px;justify-content:flex-end;padding-right:2.43px;font-size:11.5px;"><span style="transform-origin:100% 50%;transform:scaleX(0.71);letter-spacing:0.8px;">8,675</span></div>
<div class="c" style="left:715px;top:123.9px;width:40px;height:20.44999999999999px;justify-content:flex-end;padding-right:2.43px;font-size:11.5px;"><span style="transform-origin:100% 50%;transform:scaleX(0.71);letter-spacing:0.8px;">2,670</span></div>
<div class="c" style="left:755px;top:123.9px;width:42px;height:20.44999999999999px;justify-content:flex-end;padding-right:2.43px;font-size:11.5px;"><span style="transform-origin:100% 50%;transform:scaleX(0.71);letter-spacing:0.8px;">2,910</span></div>
<div class="c" style="left:1px;top:144.35px;width:53px;height:20.44999999999999px;justify-content:center;font-size:11.5px;"><span style="transform-origin:50% 50%;transform:scaleX(0.79);letter-spacing:0.8px;">25/05/13</span></div>
<div class="c" style="left:53px;top:144.35px;width:41px;height:20.44999999999999px;justify-content:flex-end;padding-right:2.43px;font-size:11.5px;"><span style="transform-origin:100% 50%;transform:scaleX(0.71);letter-spacing:0.8px;">2,348</span></div>
<div class="c" style="left:94px;top:144.35px;width:41px;height:20.44999999999999px;justify-content:flex-end;padding-right:2.43px;font-size:11.5px;"><span style="transform-origin:100% 50%;transform:scaleX(0.71);letter-spacing:0.8px;">2,393</span></div>
<div class="c" style="left:135px;top:144.35px;width:42px;height:20.44999999999999px;justify-content:flex-end;padding-right:2.43px;font-size:11.5px;"><span style="transform-origin:100% 50%;transform:scaleX(0.71);letter-spacing:0.8px;">2,370</span></div>
<div class="c" style="left:177px;top:144.35px;width:41px;height:20.44999999999999px;justify-content:flex-end;padding-right:2.43px;font-size:11.5px;"><span style="transform-origin:100% 50%;transform:scaleX(0.71);letter-spacing:0.8px;">2,496</span></div>
<div class="c" style="left:218px;top:144.35px;width:41px;height:20.44999999999999px;justify-content:flex-end;padding-right:2.43px;font-size:11.5px;"><span style="transform-origin:100% 50%;transform:scaleX(0.71);letter-spacing:0.8px;">2,722</span></div>
<div class="c" style="left:259px;top:144.35px;width:41px;height:20.44999999999999px;justify-content:flex-end;padding-right:2.43px;font-size:11.5px;"><span style="transform-origin:100% 50%;transform:scaleX(0.71);letter-spacing:0.8px;">2,682</span></div>
<div class="c" style="left:300px;top:144.35px;width:41px;height:20.44999999999999px;justify-content:flex-end;padding-right:2.43px;font-size:11.5px;"><span style="transform-origin:100% 50%;transform:scaleX(0.71);letter-spacing:0.8px;">2,590</span></div>
<div class="c" style="left:341px;top:144.35px;width:42px;height:20.44999999999999px;justify-content:flex-end;padding-right:2.43px;font-size:11.5px;"><span style="transform-origin:100% 50%;transform:scaleX(0.71);letter-spacing:0.8px;">2,429</span></div>
<div class="c" style="left:383px;top:144.35px;width:40px;height:20.44999999999999px;justify-content:flex-end;padding-right:2.43px;font-size:11.5px;"><span style="transform-origin:100% 50%;transform:scaleX(0.71);letter-spacing:0.8px;">2,645</span></div>
<div class="c" style="left:423px;top:144.35px;width:41px;height:20.44999999999999px;justify-content:flex-end;padding-right:2.43px;font-size:11.5px;"><span style="transform-origin:100% 50%;transform:scaleX(0.71);letter-spacing:0.8px;">2,519</span></div>
<div class="c" style="left:464px;top:144.35px;width:41px;height:20.44999999999999px;justify-content:flex-end;padding-right:2.43px;font-size:11.5px;"><span style="transform-origin:100% 50%;transform:scaleX(0.71);letter-spacing:0.8px;">2,382</span></div>
<div class="c" style="left:505px;top:144.35px;width:41px;height:20.44999999999999px;justify-content:flex-end;padding-right:2.43px;font-size:11.5px;"><span style="transform-origin:100% 50%;transform:scaleX(0.71);letter-spacing:0.8px;">2,384</span></div>
<div class="c" style="left:546px;top:144.35px;width:41px;height:20.44999999999999px;justify-content:flex-end;padding-right:2.43px;font-size:11.5px;"><span style="transform-origin:100% 50%;transform:scaleX(0.71);letter-spacing:0.8px;">2,635</span></div>
<div class="c" style="left:587px;top:144.35px;width:41px;height:20.44999999999999px;justify-content:flex-end;padding-right:2.43px;font-size:11.5px;"><span style="transform-origin:100% 50%;transform:scaleX(0.71);letter-spacing:0.8px;">2,551</span></div>
<div class="c" style="left:628px;top:144.35px;width:41px;height:20.44999999999999px;justify-content:flex-end;padding-right:2.43px;font-size:11.5px;"><span style="transform-origin:100% 50%;transform:scaleX(0.71);letter-spacing:0.8px;">2,939</span></div>
<div class="c" style="left:669px;top:144.35px;width:46px;height:20.44999999999999px;justify-content:flex-end;padding-right:2.43px;font-size:11.5px;"><span style="transform-origin:100% 50%;transform:scaleX(0.71);letter-spacing:0.8px;">8,691</span></div>
<div class="c" style="left:715px;top:144.35px;width:40px;height:20.44999999999999px;justify-content:flex-end;padding-right:2.43px;font-size:11.5px;"><span style="transform-origin:100% 50%;transform:scaleX(0.71);letter-spacing:0.8px;">2,680</span></div>
<div class="c" style="left:755px;top:144.35px;width:42px;height:20.44999999999999px;justify-content:flex-end;padding-right:2.43px;font-size:11.5px;"><span style="transform-origin:100% 50%;transform:scaleX(0.71);letter-spacing:0.8px;">2,910</span></div>
<div class="c" style="left:1px;top:164.79999999999998px;width:53px;height:20.44999999999999px;justify-content:center;font-size:11.5px;"><span style="transform-origin:50% 50%;transform:scaleX(0.79);letter-spacing:0.8px;">25/05/12</span></div>
<div class="c" style="left:53px;top:164.79999999999998px;width:41px;height:20.44999999999999px;justify-content:flex-end;padding-right:2.43px;font-size:11.5px;"><span style="transform-origin:100% 50%;transform:scaleX(0.71);letter-spacing:0.8px;">2,341</span></div>
<div class="c" style="left:94px;top:164.79999999999998px;width:41px;height:20.44999999999999px;justify-content:flex-end;padding-right:2.43px;font-size:11.5px;"><span style="transform-origin:100% 50%;transform:scaleX(0.71);letter-spacing:0.8px;">2,355</span></div>
<div class="c" style="left:135px;top:164.79999999999998px;width:42px;height:20.44999999999999px;justify-content:flex-end;padding-right:2.43px;font-size:11.5px;"><span style="transform-origin:100% 50%;transform:scaleX(0.71);letter-spacing:0.8px;">2,330</span></div>
<div class="c" style="left:177px;top:164.79999999999998px;width:41px;height:20.44999999999999px;justify-content:flex-end;padding-right:2.43px;font-size:11.5px;"><span style="transform-origin:100% 50%;transform:scaleX(0.71);letter-spacing:0.8px;">2,451</span></div>
<div class="c" style="left:218px;top:164.79999999999998px;width:41px;height:20.44999999999999px;justify-content:flex-end;padding-right:2.43px;font-size:11.5px;"><span style="transform-origin:100% 50%;transform:scaleX(0.71);letter-spacing:0.8px;">2,685</span></div>
<div class="c" style="left:259px;top:164.79999999999998px;width:41px;height:20.44999999999999px;justify-content:flex-end;padding-right:2.43px;font-size:11.5px;"><span style="transform-origin:100% 50%;transform:scaleX(0.71);letter-spacing:0.8px;">2,661</span></div>
<div class="c" style="left:300px;top:164.79999999999998px;width:41px;height:20.44999999999999px;justify-content:flex-end;padding-right:2.43px;font-size:11.5px;"><span style="transform-origin:100% 50%;transform:scaleX(0.71);letter-spacing:0.8px;">2,575</span></div>
<div class="c" style="left:341px;top:164.79999999999998px;width:42px;height:20.44999999999999px;justify-content:flex-end;padding-right:2.43px;font-size:11.5px;"><span style="transform-origin:100% 50%;transform:scaleX(0.71);letter-spacing:0.8px;">2,412</span></div>
<div class="c" style="left:383px;top:164.79999999999998px;width:40px;height:20.44999999999999px;justify-content:flex-end;padding-right:2.43px;font-size:11.5px;"><span style="transform-origin:100% 50%;transform:scaleX(0.71);letter-spacing:0.8px;">2,608</span></div>
<div class="c" style="left:423px;top:164.79999999999998px;width:41px;height:20.44999999999999px;justify-content:flex-end;padding-right:2.43px;font-size:11.5px;"><span style="transform-origin:100% 50%;transform:scaleX(0.71);letter-spacing:0.8px;">2,508</span></div>
<div class="c" style="left:464px;top:164.79999999999998px;width:41px;height:20.44999999999999px;justify-content:flex-end;padding-right:2.43px;font-size:11.5px;"><span style="transform-origin:100% 50%;transform:scaleX(0.71);letter-spacing:0.8px;">2,368</span></div>
<div class="c" style="left:505px;top:164.79999999999998px;width:41px;height:20.44999999999999px;justify-content:flex-end;padding-right:2.43px;font-size:11.5px;"><span style="transform-origin:100% 50%;transform:scaleX(0.71);letter-spacing:0.8px;">2,352</span></div>
<div class="c" style="left:546px;top:164.79999999999998px;width:41px;height:20.44999999999999px;justify-content:flex-end;padding-right:2.43px;font-size:11.5px;"><span style="transform-origin:100% 50%;transform:scaleX(0.71);letter-spacing:0.8px;">2,583</span></div>
<div class="c" style="left:587px;top:164.79999999999998px;width:41px;height:20.44999999999999px;justify-content:flex-end;padding-right:2.43px;font-size:11.5px;"><span style="transform-origin:100% 50%;transform:scaleX(0.71);letter-spacing:0.8px;">2,542</span></div>
<div class="c" style="left:628px;top:164.79999999999998px;width:41px;height:20.44999999999999px;justify-content:flex-end;padding-right:2.43px;font-size:11.5px;"><span style="transform-origin:100% 50%;transform:scaleX(0.71);letter-spacing:0.8px;">2,910</span></div>
<div class="c" style="left:669px;top:164.79999999999998px;width:46px;height:20.44999999999999px;justify-content:flex-end;padding-right:2.43px;font-size:11.5px;"><span style="transform-origin:100% 50%;transform:scaleX(0.71);letter-spacing:0.8px;">8,662</span></div>
<div class="c" style="left:715px;top:164.79999999999998px;width:40px;height:20.44999999999999px;justify-content:flex-end;padding-right:2.43px;font-size:11.5px;"><span style="transform-origin:100% 50%;transform:scaleX(0.71);letter-spacing:0.8px;">2,660</span></div>
<div class="c" style="left:755px;top:164.79999999999998px;width:42px;height:20.44999999999999px;justify-content:flex-end;padding-right:2.43px;font-size:11.5px;"><span style="transform-origin:100% 50%;transform:scaleX(0.71);letter-spacing:0.8px;">2,910</span></div>
<div class="c" style="left:1px;top:185.25px;width:53px;height:20.44999999999999px;justify-content:center;font-size:11.5px;"><span style="transform-origin:50% 50%;transform:scaleX(0.79);letter-spacing:0.8px;">25/05/09</span></div>
<div class="c" style="left:53px;top:185.25px;width:41px;height:20.44999999999999px;justify-content:flex-end;padding-right:2.43px;font-size:11.5px;"><span style="transform-origin:100% 50%;transform:scaleX(0.71);letter-spacing:0.8px;">2,346</span></div>
<div class="c" style="left:94px;top:185.25px;width:41px;height:20.44999999999999px;justify-content:flex-end;padding-right:2.43px;font-size:11.5px;"><span style="transform-origin:100% 50%;transform:scaleX(0.71);letter-spacing:0.8px;">2,358</span></div>
<div class="c" style="left:135px;top:185.25px;width:42px;height:20.44999999999999px;justify-content:flex-end;padding-right:2.43px;font-size:11.5px;"><span style="transform-origin:100% 50%;transform:scaleX(0.71);letter-spacing:0.8px;">2,331</span></div>
<div class="c" style="left:177px;top:185.25px;width:41px;height:20.44999999999999px;justify-content:flex-end;padding-right:2.43px;font-size:11.5px;"><span style="transform-origin:100% 50%;transform:scaleX(0.71);letter-spacing:0.8px;">2,448</span></div>
<div class="c" style="left:218px;top:185.25px;width:41px;height:20.44999999999999px;justify-content:flex-end;padding-right:2.43px;font-size:11.5px;"><span style="transform-origin:100% 50%;transform:scaleX(0.71);letter-spacing:0.8px;">2,670</span></div>
<div class="c" style="left:259px;top:185.25px;width:41px;height:20.44999999999999px;justify-content:flex-end;padding-right:2.43px;font-size:11.5px;"><span style="transform-origin:100% 50%;transform:scaleX(0.71);letter-spacing:0.8px;">2,641</span></div>
<div class="c" style="left:300px;top:185.25px;width:41px;height:20.44999999999999px;justify-content:flex-end;padding-right:2.43px;font-size:11.5px;"><span style="transform-origin:100% 50%;transform:scaleX(0.71);letter-spacing:0.8px;">2,551</span></div>
<div class="c" style="left:341px;top:185.25px;width:42px;height:20.44999999999999px;justify-content:flex-end;padding-right:2.43px;font-size:11.5px;"><span style="transform-origin:100% 50%;transform:scaleX(0.71);letter-spacing:0.8px;">2,390</span></div>
<div class="c" style="left:383px;top:185.25px;width:40px;height:20.44999999999999px;justify-content:flex-end;padding-right:2.43px;font-size:11.5px;"><span style="transform-origin:100% 50%;transform:scaleX(0.71);letter-spacing:0.8px;">2,607</span></div>
<div class="c" style="left:423px;top:185.25px;width:41px;height:20.44999999999999px;justify-content:flex-end;padding-right:2.43px;font-size:11.5px;"><span style="transform-origin:100% 50%;transform:scaleX(0.71);letter-spacing:0.8px;">2,509</span></div>
<div class="c" style="left:464px;top:185.25px;width:41px;height:20.44999999999999px;justify-content:flex-end;padding-right:2.43px;font-size:11.5px;"><span style="transform-origin:100% 50%;transform:scaleX(0.71);letter-spacing:0.8px;">2,369</span></div>
<div class="c" style="left:505px;top:185.25px;width:41px;height:20.44999999999999px;justify-content:flex-end;padding-right:2.43px;font-size:11.5px;"><span style="transform-origin:100% 50%;transform:scaleX(0.71);letter-spacing:0.8px;">2,350</span></div>
<div class="c" style="left:546px;top:185.25px;width:41px;height:20.44999999999999px;justify-content:flex-end;padding-right:2.43px;font-size:11.5px;"><span style="transform-origin:100% 50%;transform:scaleX(0.71);letter-spacing:0.8px;">2,582</span></div>
<div class="c" style="left:587px;top:185.25px;width:41px;height:20.44999999999999px;justify-content:flex-end;padding-right:2.43px;font-size:11.5px;"><span style="transform-origin:100% 50%;transform:scaleX(0.71);letter-spacing:0.8px;">2,543</span></div>
<div class="c" style="left:628px;top:185.25px;width:41px;height:20.44999999999999px;justify-content:flex-end;padding-right:2.43px;font-size:11.5px;"><span style="transform-origin:100% 50%;transform:scaleX(0.71);letter-spacing:0.8px;">2,910</span></div>
<div class="c" style="left:669px;top:185.25px;width:46px;height:20.44999999999999px;justify-content:flex-end;padding-right:2.43px;font-size:11.5px;"><span style="transform-origin:100% 50%;transform:scaleX(0.71);letter-spacing:0.8px;">8,663</span></div>
<div class="c" style="left:715px;top:185.25px;width:40px;height:20.44999999999999px;justify-content:flex-end;padding-right:2.43px;font-size:11.5px;"><span style="transform-origin:100% 50%;transform:scaleX(0.71);letter-spacing:0.8px;">2,680</span></div>
<div class="c" style="left:755px;top:185.25px;width:42px;height:20.44999999999999px;justify-content:flex-end;padding-right:2.43px;font-size:11.5px;"><span style="transform-origin:100% 50%;transform:scaleX(0.71);letter-spacing:0.8px;">2,910</span></div>
<div class="c" style="left:1px;top:205.7px;width:53px;height:20.44999999999999px;justify-content:center;font-size:11.5px;"><span style="transform-origin:50% 50%;transform:scaleX(0.79);letter-spacing:0.8px;">25/05/08</span></div>
<div class="c" style="left:53px;top:205.7px;width:41px;height:20.44999999999999px;justify-content:flex-end;padding-right:2.43px;font-size:11.5px;"><span style="transform-origin:100% 50%;transform:scaleX(0.71);letter-spacing:0.8px;">2,346</span></div>
<div class="c" style="left:94px;top:205.7px;width:41px;height:20.44999999999999px;justify-content:flex-end;padding-right:2.43px;font-size:11.5px;"><span style="transform-origin:100% 50%;transform:scaleX(0.71);letter-spacing:0.8px;">2,320</span></div>
<div class="c" style="left:135px;top:205.7px;width:42px;height:20.44999999999999px;justify-content:flex-end;padding-right:2.43px;font-size:11.5px;"><span style="transform-origin:100% 50%;transform:scaleX(0.71);letter-spacing:0.8px;">2,281</span></div>
<div class="c" style="left:177px;top:205.7px;width:41px;height:20.44999999999999px;justify-content:flex-end;padding-right:2.43px;font-size:11.5px;"><span style="transform-origin:100% 50%;transform:scaleX(0.71);letter-spacing:0.8px;">2,395</span></div>
<div class="c" style="left:218px;top:205.7px;width:41px;height:20.44999999999999px;justify-content:flex-end;padding-right:2.43px;font-size:11.5px;"><span style="transform-origin:100% 50%;transform:scaleX(0.71);letter-spacing:0.8px;">2,622</span></div>
<div class="c" style="left:259px;top:205.7px;width:41px;height:20.44999999999999px;justify-content:flex-end;padding-right:2.43px;font-size:11.5px;"><span style="transform-origin:100% 50%;transform:scaleX(0.71);letter-spacing:0.8px;">2,598</span></div>
<div class="c" style="left:300px;top:205.7px;width:41px;height:20.44999999999999px;justify-content:flex-end;padding-right:2.43px;font-size:11.5px;"><span style="transform-origin:100% 50%;transform:scaleX(0.71);letter-spacing:0.8px;">2,516</span></div>
<div class="c" style="left:341px;top:205.7px;width:42px;height:20.44999999999999px;justify-content:flex-end;padding-right:2.43px;font-size:11.5px;"><span style="transform-origin:100% 50%;transform:scaleX(0.71);letter-spacing:0.8px;">2,357</span></div>
<div class="c" style="left:383px;top:205.7px;width:40px;height:20.44999999999999px;justify-content:flex-end;padding-right:2.43px;font-size:11.5px;"><span style="transform-origin:100% 50%;transform:scaleX(0.71);letter-spacing:0.8px;">2,559</span></div>
<div class="c" style="left:423px;top:205.7px;width:41px;height:20.44999999999999px;justify-content:flex-end;padding-right:2.43px;font-size:11.5px;"><span style="transform-origin:100% 50%;transform:scaleX(0.71);letter-spacing:0.8px;">2,499</span></div>
<div class="c" style="left:464px;top:205.7px;width:41px;height:20.44999999999999px;justify-content:flex-end;padding-right:2.43px;font-size:11.5px;"><span style="transform-origin:100% 50%;transform:scaleX(0.71);letter-spacing:0.8px;">2,361</span></div>
<div class="c" style="left:505px;top:205.7px;width:41px;height:20.44999999999999px;justify-content:flex-end;padding-right:2.43px;font-size:11.5px;"><span style="transform-origin:100% 50%;transform:scaleX(0.71);letter-spacing:0.8px;">2,314</span></div>
<div class="c" style="left:546px;top:205.7px;width:41px;height:20.44999999999999px;justify-content:flex-end;padding-right:2.43px;font-size:11.5px;"><span style="transform-origin:100% 50%;transform:scaleX(0.71);letter-spacing:0.8px;">2,538</span></div>
<div class="c" style="left:587px;top:205.7px;width:41px;height:20.44999999999999px;justify-content:flex-end;padding-right:2.43px;font-size:11.5px;"><span style="transform-origin:100% 50%;transform:scaleX(0.71);letter-spacing:0.8px;">2,536</span></div>
<div class="c" style="left:628px;top:205.7px;width:41px;height:20.44999999999999px;justify-content:flex-end;padding-right:2.43px;font-size:11.5px;"><span style="transform-origin:100% 50%;transform:scaleX(0.71);letter-spacing:0.8px;">2,867</span></div>
<div class="c" style="left:669px;top:205.7px;width:46px;height:20.44999999999999px;justify-content:flex-end;padding-right:2.43px;font-size:11.5px;"><span style="transform-origin:100% 50%;transform:scaleX(0.71);letter-spacing:0.8px;">8,619</span></div>
<div class="c" style="left:715px;top:205.7px;width:40px;height:20.44999999999999px;justify-content:flex-end;padding-right:2.43px;font-size:11.5px;"><span style="transform-origin:100% 50%;transform:scaleX(0.71);letter-spacing:0.8px;">2,700</span></div>
<div class="c" style="left:755px;top:205.7px;width:42px;height:20.44999999999999px;justify-content:flex-end;padding-right:2.43px;font-size:11.5px;"><span style="transform-origin:100% 50%;transform:scaleX(0.71);letter-spacing:0.8px;">2,910</span></div>
<div style="left:0px;top:230px;width:797px;height:2px;background:#b9c0c8;"></div>
<div style="left:0px;top:232px;width:800px;height:3px;background:#dde1e8;"></div>
<div style="left:0px;top:235px;width:444px;height:1px;background:#a4a4ac;"></div>
<div style="left:0px;top:236px;width:443px;height:246px;background:#ffffff;"></div>
<div style="left:0px;top:236px;width:1px;height:248px;background:#7d8795;"></div>
<div style="left:443px;top:236px;width:1px;height:246px;background:#a8a8a8;"></div>
<div style="left:0px;top:482px;width:444px;height:1px;background:#a8a8a8;"></div>
<svg style="position:absolute;left:0;top:0" width="800" height="484" viewBox="0 0 800 484">
<line x1="9.5" y1="236" x2="9.5" y2="467" stroke="#f1f1f1" stroke-width="1"/>
<line x1="48.5" y1="236" x2="48.5" y2="467" stroke="#f1f1f1" stroke-width="1"/>
<line x1="69.5" y1="236" x2="69.5" y2="467" stroke="#f1f1f1" stroke-width="1"/>
<line x1="109.5" y1="236" x2="109.5" y2="467" stroke="#f1f1f1" stroke-width="1"/>
<line x1="182.5" y1="236" x2="182.5" y2="467" stroke="#f1f1f1" stroke-width="1"/>
<line x1="209.5" y1="236" x2="209.5" y2="467" stroke="#f1f1f1" stroke-width="1"/>
<line x1="249.5" y1="236" x2="249.5" y2="467" stroke="#f1f1f1" stroke-width="1"/>
<line x1="289.5" y1="236" x2="289.5" y2="467" stroke="#f1f1f1" stroke-width="1"/>
<line x1="329.5" y1="236" x2="329.5" y2="467" stroke="#f1f1f1" stroke-width="1"/>
<line x1="356.5" y1="236" x2="356.5" y2="467" stroke="#f1f1f1" stroke-width="1"/>
<line x1="1" y1="267.5" x2="403" y2="267.5" stroke="#f1f1f1" stroke-width="1"/>
<line x1="1" y1="305.5" x2="403" y2="305.5" stroke="#f1f1f1" stroke-width="1"/>
<line x1="1" y1="343.5" x2="403" y2="343.5" stroke="#f1f1f1" stroke-width="1"/>
<line x1="1" y1="382.5" x2="403" y2="382.5" stroke="#f1f1f1" stroke-width="1"/>
<line x1="1" y1="420.5" x2="403" y2="420.5" stroke="#f1f1f1" stroke-width="1"/>
<line x1="1" y1="459.5" x2="403" y2="459.5" stroke="#f1f1f1" stroke-width="1"/>
<path d="M9.6 267.6 L16.3 269.2 L22.9 271.6 L29.6 273.4 L36.2 272.5 L42.9 276.4 L49.6 279.9 L56.2 276.2 L62.9 272.9 L69.5 278.2 L76.2 274.9 L82.9 280.6 L89.5 281.1 L96.2 278.5 L102.8 275.0 L109.5 272.3 L116.2 273.2 L122.8 270.5 L129.5 273.3 L136.1 274.4 L142.8 272.4 L149.5 271.3 L156.1 270.5 L162.8 271.3 L169.4 271.2 L176.1 279.0 L182.8 276.4 L189.4 277.6 L196.1 288.6 L202.7 299.4 L209.4 308.3 L216.1 306.9 L222.7 304.0 L229.4 302.9 L236.0 305.7 L242.7 306.4 L249.4 309.5 L256.0 316.5 L262.7 312.7 L269.3 316.6 L276.0 321.3 L282.7 321.0 L289.3 320.6 L296.0 320.0 L302.6 325.0 L309.3 323.4 L316.0 324.5 L322.6 330.0 L329.3 330.5 L335.9 335.0 L342.6 331.3 L349.3 323.0 L355.9 323.0 L362.6 317.5 L369.2 320.4 L375.9 319.0 L382.6 325.7 L389.2 318.2" fill="none" stroke="#80c254" stroke-width="1.1" stroke-linejoin="round"/>
<path d="M9.6 323.4 L16.3 325.9 L22.9 328.5 L29.6 330.9 L36.2 331.6 L42.9 335.4 L49.6 337.9 L56.2 333.6 L62.9 329.7 L69.5 334.1 L76.2 329.9 L82.9 334.9 L89.5 335.0 L96.2 331.8 L102.8 328.1 L109.5 325.9 L116.2 325.9 L122.8 323.4 L129.5 325.9 L136.1 325.8 L142.8 324.0 L149.5 321.3 L156.1 320.4 L162.8 321.2 L169.4 321.2 L176.1 329.0 L182.8 326.4 L189.4 327.5 L196.1 340.1 L202.7 352.2 L209.4 361.1 L216.1 359.1 L222.7 355.4 L229.4 355.2 L236.0 358.9 L242.7 359.2 L249.4 362.7 L256.0 369.8 L262.7 365.2 L269.3 369.9 L276.0 374.1 L282.7 373.3 L289.3 372.2 L296.0 373.4 L302.6 378.4 L309.3 378.3 L316.0 379.4 L322.6 385.0 L329.3 384.3 L335.9 389.3 L342.6 394.3 L349.3 385.8 L355.9 385.7 L362.6 375.7 L369.2 377.2 L375.9 375.7 L382.6 382.0 L389.2 373.6" fill="none" stroke="#a4a4ea" stroke-width="1.1" stroke-linejoin="round"/>
<path d="M9.6 379.4 L16.3 381.5 L22.9 383.6 L29.6 384.5 L36.2 385.3 L42.9 389.7 L49.6 393.2 L56.2 388.8 L62.9 384.7 L69.5 389.2 L76.2 384.2 L82.9 390.2 L89.5 392.2 L96.2 388.3 L102.8 383.6 L109.5 382.8 L116.2 382.4 L122.8 378.7 L129.5 383.2 L136.1 383.2 L142.8 381.7 L149.5 380.3 L156.1 379.6 L162.8 378.6 L169.4 377.4 L176.1 387.9 L182.8 386.5 L189.4 387.0 L196.1 398.1 L202.7 409.1 L209.4 420.2 L216.1 418.4 L222.7 415.0 L229.4 414.3 L236.0 418.0 L242.7 419.4 L249.4 422.2 L256.0 429.7 L262.7 424.4 L269.3 428.6 L276.0 434.0 L282.7 433.9 L289.3 433.3 L296.0 433.4 L302.6 439.2 L309.3 437.3 L316.0 438.4 L322.6 445.6 L329.3 444.5 L335.9 448.5 L342.6 443.5 L349.3 433.9 L355.9 434.1 L362.6 426.4 L369.2 430.1 L375.9 428.0 L382.6 436.2 L389.2 427.2" fill="none" stroke="#c43c3c" stroke-width="1.1" stroke-linejoin="round"/>
<path d="M9.6 373.4 L16.3 375.3 L22.9 376.7 L29.6 377.9 L36.2 378.6 L42.9 379.1 L49.6 380.1 L56.2 377.6 L62.9 375.2 L69.5 378.2 L76.2 376.9 L82.9 379.4 L89.5 380.5 L96.2 381.7 L102.8 380.7 L109.5 381.1 L116.2 381.8 L122.8 382.5 L129.5 383.7 L136.1 383.6 L142.8 381.9 L149.5 380.3 L156.1 379.3 L162.8 378.6 L169.4 378.4 L176.1 380.9 L182.8 378.2 L189.4 378.2 L196.1 384.5 L202.7 390.9 L209.4 397.2 L216.1 394.8 L222.7 394.6 L229.4 394.9 L236.0 398.6 L242.7 402.2 L249.4 403.6 L256.0 407.5 L262.7 408.1 L269.3 415.4 L276.0 417.5 L282.7 418.0 L289.3 418.4 L296.0 418.7 L302.6 421.6 L309.3 422.3 L316.0 422.7 L322.6 425.5 L329.3 426.2 L335.9 430.6 L342.6 431.0 L349.3 431.0 L355.9 432.0 L362.6 430.7 L369.2 436.2 L375.9 437.2 L382.6 442.1 L389.2 440.8" fill="none" stroke="#5048cc" stroke-width="1.1" stroke-linejoin="round"/>
<path d="M9.6 368.5 L16.3 369.6 L22.9 370.8 L29.6 371.3 L36.2 370.5 L42.9 372.0 L49.6 372.2 L56.2 367.9 L62.9 364.1 L69.5 369.6 L76.2 368.3 L82.9 372.3 L89.5 376.2 L96.2 374.4 L102.8 369.4 L109.5 369.5 L116.2 370.1 L122.8 366.9 L129.5 371.6 L136.1 370.3 L142.8 367.6 L149.5 365.4 L156.1 365.4 L162.8 366.2 L169.4 364.0 L176.1 373.1 L182.8 371.7 L189.4 372.7 L196.1 384.5 L202.7 396.3 L209.4 408.0 L216.1 407.4 L222.7 405.5 L229.4 404.8 L236.0 409.2 L242.7 409.5 L249.4 413.7 L256.0 420.1 L262.7 415.9 L269.3 420.1 L276.0 424.9 L282.7 425.3 L289.3 424.0 L296.0 423.4 L302.6 429.3 L309.3 427.3 L316.0 429.0 L322.6 435.3 L329.3 435.3 L335.9 439.5 L342.6 436.0 L349.3 428.7 L355.9 429.3 L362.6 422.0 L369.2 426.6 L375.9 426.4 L382.6 432.8 L389.2 427.8" fill="none" stroke="#3a32b0" stroke-width="1.1" stroke-linejoin="round"/>
<line x1="403.5" y1="236" x2="403.5" y2="467.5" stroke="#8c8c8c" stroke-width="1"/>
<line x1="1" y1="467.5" x2="443" y2="467.5" stroke="#8c8c8c" stroke-width="1"/>
<line x1="403" y1="267.5" x2="408" y2="267.5" stroke="#8c8c8c" stroke-width="1"/>
<line x1="403" y1="286.6" x2="406" y2="286.6" stroke="#9c9c9c" stroke-width="1"/>
<line x1="403" y1="305.8" x2="408" y2="305.8" stroke="#8c8c8c" stroke-width="1"/>
<line x1="403" y1="324.9" x2="406" y2="324.9" stroke="#9c9c9c" stroke-width="1"/>
<line x1="403" y1="344.1" x2="408" y2="344.1" stroke="#8c8c8c" stroke-width="1"/>
<line x1="403" y1="363.2" x2="406" y2="363.2" stroke="#9c9c9c" stroke-width="1"/>
<line x1="403" y1="382.4" x2="408" y2="382.4" stroke="#8c8c8c" stroke-width="1"/>
<line x1="403" y1="401.5" x2="406" y2="401.5" stroke="#9c9c9c" stroke-width="1"/>
<line x1="403" y1="420.7" x2="408" y2="420.7" stroke="#8c8c8c" stroke-width="1"/>
<line x1="403" y1="439.8" x2="406" y2="439.8" stroke="#9c9c9c" stroke-width="1"/>
<line x1="403" y1="459.0" x2="408" y2="459.0" stroke="#8c8c8c" stroke-width="1"/>
</svg>
<div class="c" style="left:413px;top:260.5px;width:30px;height:14px;font-size:11.5px;color:#2a2a2a"><span style="transform-origin:0 50%;transform:scaleX(0.8)">3,200</span></div>
<div class="c" style="left:413px;top:298.8px;width:30px;height:14px;font-size:11.5px;color:#2a2a2a"><span style="transform-origin:0 50%;transform:scaleX(0.8)">3,000</span></div>
<div class="c" style="left:413px;top:337.1px;width:30px;height:14px;font-size:11.5px;color:#2a2a2a"><span style="transform-origin:0 50%;transform:scaleX(0.8)">2,800</span></div>
<div class="c" style="left:413px;top:375.4px;width:30px;height:14px;font-size:11.5px;color:#2a2a2a"><span style="transform-origin:0 50%;transform:scaleX(0.8)">2,600</span></div>
<div class="c" style="left:413px;top:413.7px;width:30px;height:14px;font-size:11.5px;color:#2a2a2a"><span style="transform-origin:0 50%;transform:scaleX(0.8)">2,400</span></div>
<div class="c" style="left:413px;top:452.0px;width:30px;height:14px;font-size:11.5px;color:#2a2a2a"><span style="transform-origin:0 50%;transform:scaleX(0.8)">2,200</span></div>
<div class="c" style="left:10.5px;top:469px;width:40px;height:14px;font-size:11.5px;color:#2a2a2a"><span style="transform-origin:0 50%;transform:scaleX(0.86)">02</span></div>
<div style="left:9.0px;top:467px;width:1px;height:4px;background:#8c8c8c"></div>
<div class="c" style="left:49.5px;top:469px;width:40px;height:14px;font-size:11.5px;color:#2a2a2a"><span style="transform-origin:0 50%;transform:scaleX(0.86)">03</span></div>
<div style="left:48.0px;top:467px;width:1px;height:4px;background:#8c8c8c"></div>
<div class="c" style="left:70.5px;top:469px;width:40px;height:14px;font-size:11.5px;color:#2a2a2a"><span style="transform-origin:0 50%;transform:scaleX(0.86)">03/07</span></div>
<div style="left:69.0px;top:467px;width:1px;height:4px;background:#8c8c8c"></div>
<div class="c" style="left:110.5px;top:469px;width:40px;height:14px;font-size:11.5px;color:#2a2a2a"><span style="transform-origin:0 50%;transform:scaleX(0.86)">03/17</span></div>
<div style="left:109.0px;top:467px;width:1px;height:4px;background:#8c8c8c"></div>
<div class="c" style="left:183.5px;top:469px;width:40px;height:14px;font-size:11.5px;color:#2a2a2a"><span style="transform-origin:0 50%;transform:scaleX(0.86)">04</span></div>
<div style="left:182.0px;top:467px;width:1px;height:4px;background:#8c8c8c"></div>
<div class="c" style="left:210.5px;top:469px;width:40px;height:14px;font-size:11.5px;color:#2a2a2a"><span style="transform-origin:0 50%;transform:scaleX(0.86)">04/07</span></div>
<div style="left:209.0px;top:467px;width:1px;height:4px;background:#8c8c8c"></div>
<div class="c" style="left:250.5px;top:469px;width:40px;height:14px;font-size:11.5px;color:#2a2a2a"><span style="transform-origin:0 50%;transform:scaleX(0.86)">04/15</span></div>
<div style="left:249.0px;top:467px;width:1px;height:4px;background:#8c8c8c"></div>
<div class="c" style="left:290.5px;top:469px;width:40px;height:14px;font-size:11.5px;color:#2a2a2a"><span style="transform-origin:0 50%;transform:scaleX(0.86)">04/23</span></div>
<div style="left:289.0px;top:467px;width:1px;height:4px;background:#8c8c8c"></div>
<div class="c" style="left:330.5px;top:469px;width:40px;height:14px;font-size:11.5px;color:#2a2a2a"><span style="transform-origin:0 50%;transform:scaleX(0.86)">05</span></div>
<div style="left:329.0px;top:467px;width:1px;height:4px;background:#8c8c8c"></div>
<div class="c" style="left:357.5px;top:469px;width:40px;height:14px;font-size:11.5px;color:#2a2a2a"><span style="transform-origin:0 50%;transform:scaleX(0.86)">05/12</span></div>
<div style="left:356.0px;top:467px;width:1px;height:4px;background:#8c8c8c"></div>
<div class="c" style="left:399px;top:469px;width:40px;height:14px;font-size:11.5px;color:#2a2a2a"><span style="transform-origin:0 50%;transform:scaleX(0.86)">05/20</span></div>
<svg style="position:absolute;left:4.5px;top:239.4px;overflow:visible;color:#3c3cb8" width="32.3" height="10.0" fill="none" stroke="currentColor" stroke-width="1.2" font-family="Liberation Sans, sans-serif"><path d="M1.2 0.0H7.88V2.7M0.14 4.23H8.94M4.54 4.23V5.76M1.2 6.3H7.88V9.0"/><path d="M11.66 0.27H17.82V5.22M10.34 8.10H19.14M14.74 5.22V8.10"/><text x="0" y="0" transform="translate(19.80 8.10) scale(0.84 1)" font-size="11.2" fill="currentColor" stroke="none">1Y</text></svg>
<svg style="position:absolute;left:38px;top:239.4px;overflow:visible;color:#4a4acc" width="32.3" height="10.0" fill="none" stroke="currentColor" stroke-width="1.2" font-family="Liberation Sans, sans-serif"><path d="M1.2 0.0H7.88V2.7M0.14 4.23H8.94M4.54 4.23V5.76M1.2 6.3H7.88V9.0"/><path d="M11.66 0.27H17.82V5.22M10.34 8.10H19.14M14.74 5.22V8.10"/><text x="0" y="0" transform="translate(19.80 8.10) scale(0.84 1)" font-size="11.2" fill="currentColor" stroke="none">2Y</text></svg>
<svg style="position:absolute;left:73px;top:239.4px;overflow:visible;color:#cc3c3c" width="32.3" height="10.0" fill="none" stroke="currentColor" stroke-width="1.2" font-family="Liberation Sans, sans-serif"><path d="M1.2 0.0H7.88V2.7M0.14 4.23H8.94M4.54 4.23V5.76M1.2 6.3H7.88V9.0"/><path d="M11.66 0.27H17.82V5.22M10.34 8.10H19.14M14.74 5.22V8.10"/><text x="0" y="0" transform="translate(19.80 8.10) scale(0.84 1)" font-size="11.2" fill="currentColor" stroke="none">3Y</text></svg>
<svg style="position:absolute;left:107px;top:239.4px;overflow:visible;color:#a2a2e6" width="32.3" height="10.0" fill="none" stroke="currentColor" stroke-width="1.2" font-family="Liberation Sans, sans-serif"><path d="M2.91 0.0V0.9072M0.4 1.26H5.42M1.1028000000000004 3.4272000000000005A1.8071999999999997 1.512 0 1 0 4.7172 3.4272000000000005A1.8071999999999997 1.512 0 1 0 1.1028000000000004 3.4272000000000005ZM6.83 0.00V5.94M6.83 2.70H8.76M1.46 6.3V9.0H8.24"/><path d="M10.6 0.54H15.27M12.934999999999999 0.54L10.6 5.04M12.934999999999999 2.115L15.27 5.04M17.91 0.00V5.94M15.80 2.70H17.91M11.66 6.3V9.0H18.44"/><text x="0" y="0" transform="translate(19.80 8.10) scale(0.84 1)" font-size="11.2" fill="currentColor" stroke="none">3Y</text></svg>
<svg style="position:absolute;left:141px;top:239.4px;overflow:visible;color:#7cbc50" width="36.5" height="10.0" fill="none" stroke="currentColor" stroke-width="1.2" font-family="Liberation Sans, sans-serif"><path d="M3.395 0.0V0.8099999999999999M0.84 1.125H5.95M1.5554 3.06A1.8396000000000001 1.3499999999999999 0 1 0 5.2346 3.06A1.8396000000000001 1.3499999999999999 0 1 0 1.5554 3.06ZM0.14 6.66H6.30M3.40 5.04V6.66M7.88 0.00V9.00"/><path d="M13.2 1.08L10.6 8.28M13.2 3.5999999999999996L15.8 8.28M17.20 0.00V9.00M17.20 4.50H19.14"/><text x="0" y="0" transform="translate(19.80 8.10) scale(0.84 1)" font-size="11.2" fill="currentColor" stroke="none">AA-</text></svg>
<div style="left:448px;top:236px;width:349px;height:19px;background:#2b6db6;"></div>
<div style="left:448px;top:255px;width:349px;height:226px;background:#ffffff;"></div>
<div style="left:448px;top:255px;width:71px;height:226px;background:#d3e1ef;"></div>
<div style="left:448px;top:274.6px;width:349px;height:1.0px;background:#bccadb;"></div>
<div style="left:448px;top:295.07000000000005px;width:349px;height:1.0px;background:#bccadb;"></div>
<div style="left:448px;top:315.54px;width:349px;height:1.0px;background:#bccadb;"></div>
<div style="left:448px;top:336.01px;width:349px;height:1.0px;background:#bccadb;"></div>
<div style="left:448px;top:356.48px;width:349px;height:1.0px;background:#bccadb;"></div>
<div style="left:448px;top:376.95000000000005px;width:349px;height:1.0px;background:#bccadb;"></div>
<div style="left:448px;top:397.42px;width:349px;height:1.0px;background:#bccadb;"></div>
<div style="left:448px;top:417.89px;width:349px;height:1.0px;background:#bccadb;"></div>
<div style="left:448px;top:438.36px;width:349px;height:1.0px;background:#bccadb;"></div>
<div style="left:448px;top:458.83000000000004px;width:349px;height:1.0px;background:#bccadb;"></div>
<div style="left:448px;top:479.3px;width:349px;height:1.0px;background:#bccadb;"></div>
<div style="left:519px;top:255px;width:1px;height:226px;background:#bccadb;"></div>
<div style="left:519px;top:236px;width:1px;height:19px;background:#4a86c6;"></div>
<div style="left:589px;top:255px;width:1px;height:226px;background:#bccadb;"></div>
<div style="left:589px;top:236px;width:1px;height:19px;background:#4a86c6;"></div>
<div style="left:659px;top:255px;width:1px;height:226px;background:#bccadb;"></div>
<div style="left:659px;top:236px;width:1px;height:19px;background:#4a86c6;"></div>
<div style="left:728px;top:255px;width:1px;height:226px;background:#bccadb;"></div>
<div style="left:728px;top:236px;width:1px;height:19px;background:#4a86c6;"></div>
<div style="left:448px;top:236px;width:1px;height:246px;background:#8a9aac;"></div>
<div style="left:448px;top:481px;width:349px;height:1px;background:#9aa8b8;"></div>
<svg style="position:absolute;left:463.15px;top:241.20px;overflow:visible;color:#dcecfc" width="32.3" height="10.0" fill="none" stroke="currentColor" stroke-width="1.1" font-family="Liberation Sans, sans-serif"><path d="M1.2 0.0H7.88V2.7M0.14 4.23H8.94M4.54 4.23V5.76M1.2 6.3H7.88V9.0"/><path d="M11.66 0.27H17.82V5.22M10.34 8.10H19.14M14.74 5.22V8.10"/><text x="0" y="0" transform="translate(19.80 8.10) scale(0.84 1)" font-size="11.2" fill="currentColor" stroke="none">5Y</text></svg>
<svg style="position:absolute;left:533.44px;top:241.20px;overflow:visible;color:#dcecfc" width="42.7" height="10.0" fill="none" stroke="currentColor" stroke-width="1.1" font-family="Liberation Sans, sans-serif"><text x="0" y="0" transform="translate(-0.60 8.10) scale(0.84 1)" font-size="11.2" fill="currentColor" stroke="none">11</text><path d="M13.665000000000001 1.08L11.07 8.28M13.665000000000001 3.5999999999999996L16.26 8.28M18.28 0.00V9.00"/><text x="0" y="0" transform="translate(20.26 8.10) scale(0.84 1)" font-size="11.2" fill="currentColor" stroke="none">30</text><path d="M33.43 0.0V2.88H38.71V0.0M33.43 1.44H38.71M31.67 4.32H40.47M36.07 4.32V5.76M32.99 6.3V9.0H39.77"/></svg>
<svg style="position:absolute;left:603.44px;top:241.20px;overflow:visible;color:#dcecfc" width="42.7" height="10.0" fill="none" stroke="currentColor" stroke-width="1.1" font-family="Liberation Sans, sans-serif"><text x="0" y="0" transform="translate(-0.60 8.10) scale(0.84 1)" font-size="11.2" fill="currentColor" stroke="none">16</text><path d="M13.665000000000001 1.08L11.07 8.28M13.665000000000001 3.5999999999999996L16.26 8.28M18.28 0.00V9.00"/><text x="0" y="0" transform="translate(20.26 8.10) scale(0.84 1)" font-size="11.2" fill="currentColor" stroke="none">00</text><path d="M33.43 0.0V2.88H38.71V0.0M33.43 1.44H38.71M31.67 4.32H40.47M36.07 4.32V5.76M32.99 6.3V9.0H39.77"/></svg>
<svg style="position:absolute;left:683.60px;top:241.20px;overflow:visible;color:#dcecfc" width="21.4" height="10.0" fill="none" stroke="currentColor" stroke-width="1.1" font-family="Liberation Sans, sans-serif"><path d="M0.4 0.54H5.07M2.7350000000000003 0.54L0.4 5.04M2.7350000000000003 2.115L5.07 5.04M7.71 0.00V5.94M5.60 2.70H7.71M1.46 6.3V9.0H8.24"/><path d="M10.6 1.08H15.8Q15.8 5.3999999999999995 11.64 8.28M17.82 0.00V9.00"/></svg>
<svg style="position:absolute;left:742.40px;top:241.20px;overflow:visible;color:#dcecfc" width="41.8" height="10.0" fill="none" stroke="currentColor" stroke-width="1.1" font-family="Liberation Sans, sans-serif"><path d="M0.4 0.54H5.07M2.7350000000000003 0.54L0.4 5.04M2.7350000000000003 2.115L5.07 5.04M7.71 0.00V5.94M5.60 2.70H7.71M1.46 6.3V9.0H8.24"/><path d="M10.6 1.08H15.8Q15.8 5.3999999999999995 11.64 8.28M17.82 0.00V9.00"/><path d="M24.59 1.62H20.8V7.74H24.59M26.52 0.00V9.00M24.59 4.50H26.52M28.64 0.00V9.00"/><path d="M31.0 1.35V8.1H35.67V1.35M31.0 4.725H35.67M38.22 0.00V9.00"/></svg>
<svg style="position:absolute;left:514.5px;top:250px" width="4" height="4"><path d="M3.5 0 L3.5 3.5 L0 3.5 Z" fill="#e8f0ff"/></svg>
<div class="c" style="left:449px;top:256px;width:71px;height:19.600000000000023px;justify-content:center;font-size:11.5px;"><span style="transform-origin:50% 50%;transform:scaleX(0.79);letter-spacing:0.8px;">25/05/19</span></div>
<div class="c" style="left:519px;top:256px;width:70px;height:19.600000000000023px;justify-content:flex-end;padding-right:5.43px;font-size:11.5px;"><span style="transform-origin:100% 50%;transform:scaleX(0.71);letter-spacing:0.8px;">2,463</span></div>
<div class="c" style="left:589px;top:256px;width:70px;height:19.600000000000023px;justify-content:flex-end;padding-right:5.43px;font-size:11.5px;"><span style="transform-origin:100% 50%;transform:scaleX(0.71);letter-spacing:0.8px;">2,501</span></div>
<div class="c" style="left:659px;top:256px;width:69px;height:19.600000000000023px;justify-content:flex-end;padding-right:5.43px;font-size:11.5px;"><span style="transform-origin:100% 50%;transform:scaleX(0.71);letter-spacing:0.8px;">2,445</span></div>
<div class="c" style="left:728px;top:256px;width:69px;height:19.600000000000023px;justify-content:flex-end;padding-right:3.43px;color:#cc3333;font-size:11.5px;"><span style="transform-origin:100% 50%;transform:scaleX(0.71);letter-spacing:0.8px;">0,056</span></div>
<div class="c" style="left:449px;top:275.6px;width:71px;height:20.470000000000027px;justify-content:center;font-size:11.5px;"><span style="transform-origin:50% 50%;transform:scaleX(0.79);letter-spacing:0.8px;">25/05/16</span></div>
<div class="c" style="left:519px;top:275.6px;width:70px;height:20.470000000000027px;justify-content:flex-end;padding-right:5.43px;font-size:11.5px;"><span style="transform-origin:100% 50%;transform:scaleX(0.71);letter-spacing:0.8px;">2,449</span></div>
<div class="c" style="left:589px;top:275.6px;width:70px;height:20.470000000000027px;justify-content:flex-end;padding-right:5.43px;font-size:11.5px;"><span style="transform-origin:100% 50%;transform:scaleX(0.71);letter-spacing:0.8px;">2,445</span></div>
<div class="c" style="left:659px;top:275.6px;width:69px;height:20.470000000000027px;justify-content:flex-end;padding-right:5.43px;font-size:11.5px;"><span style="transform-origin:100% 50%;transform:scaleX(0.71);letter-spacing:0.8px;">2,496</span></div>
<div class="c" style="left:728px;top:275.6px;width:69px;height:20.470000000000027px;justify-content:flex-end;padding-right:3.43px;color:#3a3ab0;font-size:11.5px;"><span style="transform-origin:100% 50%;transform:scaleX(0.71);letter-spacing:0.8px;"><span style='display:inline-block;width:5px;height:1.1px;background:currentColor;vertical-align:middle;margin-right:2px;position:relative;top:-0.5px'></span>0,051</span></div>
<div class="c" style="left:449px;top:296.07000000000005px;width:71px;height:20.46999999999997px;justify-content:center;font-size:11.5px;"><span style="transform-origin:50% 50%;transform:scaleX(0.79);letter-spacing:0.8px;">25/05/15</span></div>
<div class="c" style="left:519px;top:296.07000000000005px;width:70px;height:20.46999999999997px;justify-content:flex-end;padding-right:5.43px;font-size:11.5px;"><span style="transform-origin:100% 50%;transform:scaleX(0.71);letter-spacing:0.8px;">2,497</span></div>
<div class="c" style="left:589px;top:296.07000000000005px;width:70px;height:20.46999999999997px;justify-content:flex-end;padding-right:5.43px;font-size:11.5px;"><span style="transform-origin:100% 50%;transform:scaleX(0.71);letter-spacing:0.8px;">2,496</span></div>
<div class="c" style="left:659px;top:296.07000000000005px;width:69px;height:20.46999999999997px;justify-content:flex-end;padding-right:5.43px;font-size:11.5px;"><span style="transform-origin:100% 50%;transform:scaleX(0.71);letter-spacing:0.8px;">2,482</span></div>
<div class="c" style="left:728px;top:296.07000000000005px;width:69px;height:20.46999999999997px;justify-content:flex-end;padding-right:3.43px;color:#cc3333;font-size:11.5px;"><span style="transform-origin:100% 50%;transform:scaleX(0.71);letter-spacing:0.8px;">0,014</span></div>
<div class="c" style="left:449px;top:316.54px;width:71px;height:20.46999999999997px;justify-content:center;font-size:11.5px;"><span style="transform-origin:50% 50%;transform:scaleX(0.79);letter-spacing:0.8px;">25/05/14</span></div>
<div class="c" style="left:519px;top:316.54px;width:70px;height:20.46999999999997px;justify-content:flex-end;padding-right:5.43px;font-size:11.5px;"><span style="transform-origin:100% 50%;transform:scaleX(0.71);letter-spacing:0.8px;">2,496</span></div>
<div class="c" style="left:589px;top:316.54px;width:70px;height:20.46999999999997px;justify-content:flex-end;padding-right:5.43px;font-size:11.5px;"><span style="transform-origin:100% 50%;transform:scaleX(0.71);letter-spacing:0.8px;">2,482</span></div>
<div class="c" style="left:659px;top:316.54px;width:69px;height:20.46999999999997px;justify-content:flex-end;padding-right:5.43px;font-size:11.5px;"><span style="transform-origin:100% 50%;transform:scaleX(0.71);letter-spacing:0.8px;">2,496</span></div>
<div class="c" style="left:728px;top:316.54px;width:69px;height:20.46999999999997px;justify-content:flex-end;padding-right:3.43px;color:#3a3ab0;font-size:11.5px;"><span style="transform-origin:100% 50%;transform:scaleX(0.71);letter-spacing:0.8px;"><span style='display:inline-block;width:5px;height:1.1px;background:currentColor;vertical-align:middle;margin-right:2px;position:relative;top:-0.5px'></span>0,014</span></div>
<div class="c" style="left:449px;top:337.01px;width:71px;height:20.470000000000027px;justify-content:center;font-size:11.5px;"><span style="transform-origin:50% 50%;transform:scaleX(0.79);letter-spacing:0.8px;">25/05/13</span></div>
<div class="c" style="left:519px;top:337.01px;width:70px;height:20.470000000000027px;justify-content:flex-end;padding-right:5.43px;font-size:11.5px;"><span style="transform-origin:100% 50%;transform:scaleX(0.71);letter-spacing:0.8px;">2,486</span></div>
<div class="c" style="left:589px;top:337.01px;width:70px;height:20.470000000000027px;justify-content:flex-end;padding-right:5.43px;font-size:11.5px;"><span style="transform-origin:100% 50%;transform:scaleX(0.71);letter-spacing:0.8px;">2,496</span></div>
<div class="c" style="left:659px;top:337.01px;width:69px;height:20.470000000000027px;justify-content:flex-end;padding-right:5.43px;font-size:11.5px;"><span style="transform-origin:100% 50%;transform:scaleX(0.71);letter-spacing:0.8px;">2,451</span></div>
<div class="c" style="left:728px;top:337.01px;width:69px;height:20.470000000000027px;justify-content:flex-end;padding-right:3.43px;color:#cc3333;font-size:11.5px;"><span style="transform-origin:100% 50%;transform:scaleX(0.71);letter-spacing:0.8px;">0,045</span></div>
<div class="c" style="left:449px;top:357.48px;width:71px;height:20.470000000000027px;justify-content:center;font-size:11.5px;"><span style="transform-origin:50% 50%;transform:scaleX(0.79);letter-spacing:0.8px;">25/05/12</span></div>
<div class="c" style="left:519px;top:357.48px;width:70px;height:20.470000000000027px;justify-content:flex-end;padding-right:5.43px;font-size:11.5px;"><span style="transform-origin:100% 50%;transform:scaleX(0.71);letter-spacing:0.8px;">2,455</span></div>
<div class="c" style="left:589px;top:357.48px;width:70px;height:20.470000000000027px;justify-content:flex-end;padding-right:5.43px;font-size:11.5px;"><span style="transform-origin:100% 50%;transform:scaleX(0.71);letter-spacing:0.8px;">2,451</span></div>
<div class="c" style="left:659px;top:357.48px;width:69px;height:20.470000000000027px;justify-content:flex-end;padding-right:5.43px;font-size:11.5px;"><span style="transform-origin:100% 50%;transform:scaleX(0.71);letter-spacing:0.8px;">2,448</span></div>
<div class="c" style="left:728px;top:357.48px;width:69px;height:20.470000000000027px;justify-content:flex-end;padding-right:3.43px;color:#cc3333;font-size:11.5px;"><span style="transform-origin:100% 50%;transform:scaleX(0.71);letter-spacing:0.8px;">0,003</span></div>
<div class="c" style="left:449px;top:377.95000000000005px;width:71px;height:20.46999999999997px;justify-content:center;font-size:11.5px;"><span style="transform-origin:50% 50%;transform:scaleX(0.79);letter-spacing:0.8px;">25/05/09</span></div>
<div class="c" style="left:519px;top:377.95000000000005px;width:70px;height:20.46999999999997px;justify-content:flex-end;padding-right:5.43px;font-size:11.5px;"><span style="transform-origin:100% 50%;transform:scaleX(0.71);letter-spacing:0.8px;">2,443</span></div>
<div class="c" style="left:589px;top:377.95000000000005px;width:70px;height:20.46999999999997px;justify-content:flex-end;padding-right:5.43px;font-size:11.5px;"><span style="transform-origin:100% 50%;transform:scaleX(0.71);letter-spacing:0.8px;">2,448</span></div>
<div class="c" style="left:659px;top:377.95000000000005px;width:69px;height:20.46999999999997px;justify-content:flex-end;padding-right:5.43px;font-size:11.5px;"><span style="transform-origin:100% 50%;transform:scaleX(0.71);letter-spacing:0.8px;">2,395</span></div>
<div class="c" style="left:728px;top:377.95000000000005px;width:69px;height:20.46999999999997px;justify-content:flex-end;padding-right:3.43px;color:#cc3333;font-size:11.5px;"><span style="transform-origin:100% 50%;transform:scaleX(0.71);letter-spacing:0.8px;">0,053</span></div>
<div class="c" style="left:449px;top:398.42px;width:71px;height:20.46999999999997px;justify-content:center;font-size:11.5px;"><span style="transform-origin:50% 50%;transform:scaleX(0.79);letter-spacing:0.8px;">25/05/08</span></div>
<div class="c" style="left:519px;top:398.42px;width:70px;height:20.46999999999997px;justify-content:flex-end;padding-right:5.43px;font-size:11.5px;"><span style="transform-origin:100% 50%;transform:scaleX(0.71);letter-spacing:0.8px;">2,370</span></div>
<div class="c" style="left:589px;top:398.42px;width:70px;height:20.46999999999997px;justify-content:flex-end;padding-right:5.43px;font-size:11.5px;"><span style="transform-origin:100% 50%;transform:scaleX(0.71);letter-spacing:0.8px;">2,395</span></div>
<div class="c" style="left:659px;top:398.42px;width:69px;height:20.46999999999997px;justify-content:flex-end;padding-right:5.43px;font-size:11.5px;"><span style="transform-origin:100% 50%;transform:scaleX(0.71);letter-spacing:0.8px;">2,379</span></div>
<div class="c" style="left:728px;top:398.42px;width:69px;height:20.46999999999997px;justify-content:flex-end;padding-right:3.43px;color:#cc3333;font-size:11.5px;"><span style="transform-origin:100% 50%;transform:scaleX(0.71);letter-spacing:0.8px;">0,016</span></div>
<div class="c" style="left:449px;top:418.89px;width:71px;height:20.470000000000027px;justify-content:center;font-size:11.5px;"><span style="transform-origin:50% 50%;transform:scaleX(0.79);letter-spacing:0.8px;">25/05/07</span></div>
<div class="c" style="left:519px;top:418.89px;width:70px;height:20.470000000000027px;justify-content:flex-end;padding-right:5.43px;font-size:11.5px;"><span style="transform-origin:100% 50%;transform:scaleX(0.71);letter-spacing:0.8px;">2,384</span></div>
<div class="c" style="left:589px;top:418.89px;width:70px;height:20.470000000000027px;justify-content:flex-end;padding-right:5.43px;font-size:11.5px;"><span style="transform-origin:100% 50%;transform:scaleX(0.71);letter-spacing:0.8px;">2,379</span></div>
<div class="c" style="left:659px;top:418.89px;width:69px;height:20.470000000000027px;justify-content:flex-end;padding-right:5.43px;font-size:11.5px;"><span style="transform-origin:100% 50%;transform:scaleX(0.71);letter-spacing:0.8px;">2,394</span></div>
<div class="c" style="left:728px;top:418.89px;width:69px;height:20.470000000000027px;justify-content:flex-end;padding-right:3.43px;color:#3a3ab0;font-size:11.5px;"><span style="transform-origin:100% 50%;transform:scaleX(0.71);letter-spacing:0.8px;"><span style='display:inline-block;width:5px;height:1.1px;background:currentColor;vertical-align:middle;margin-right:2px;position:relative;top:-0.5px'></span>0,015</span></div>
<div class="c" style="left:449px;top:439.36px;width:71px;height:20.470000000000027px;justify-content:center;font-size:11.5px;"><span style="transform-origin:50% 50%;transform:scaleX(0.79);letter-spacing:0.8px;">25/05/02</span></div>
<div class="c" style="left:519px;top:439.36px;width:70px;height:20.470000000000027px;justify-content:flex-end;padding-right:5.43px;font-size:11.5px;"><span style="transform-origin:100% 50%;transform:scaleX(0.71);letter-spacing:0.8px;">2,403</span></div>
<div class="c" style="left:589px;top:439.36px;width:70px;height:20.470000000000027px;justify-content:flex-end;padding-right:5.43px;font-size:11.5px;"><span style="transform-origin:100% 50%;transform:scaleX(0.71);letter-spacing:0.8px;">2,394</span></div>
<div class="c" style="left:659px;top:439.36px;width:69px;height:20.470000000000027px;justify-content:flex-end;padding-right:5.43px;font-size:11.5px;"><span style="transform-origin:100% 50%;transform:scaleX(0.71);letter-spacing:0.8px;">2,375</span></div>
<div class="c" style="left:728px;top:439.36px;width:69px;height:20.470000000000027px;justify-content:flex-end;padding-right:3.43px;color:#cc3333;font-size:11.5px;"><span style="transform-origin:100% 50%;transform:scaleX(0.71);letter-spacing:0.8px;">0,019</span></div>
<div class="c" style="left:449px;top:459.83000000000004px;width:71px;height:20.46999999999997px;justify-content:center;font-size:11.5px;"><span style="transform-origin:50% 50%;transform:scaleX(0.79);letter-spacing:0.8px;">25/04/30</span></div>
<div class="c" style="left:519px;top:459.83000000000004px;width:70px;height:20.46999999999997px;justify-content:flex-end;padding-right:5.43px;font-size:11.5px;"><span style="transform-origin:100% 50%;transform:scaleX(0.71);letter-spacing:0.8px;">2,401</span></div>
<div class="c" style="left:589px;top:459.83000000000004px;width:70px;height:20.46999999999997px;justify-content:flex-end;padding-right:5.43px;font-size:11.5px;"><span style="transform-origin:100% 50%;transform:scaleX(0.71);letter-spacing:0.8px;">2,375</span></div>
<div class="c" style="left:659px;top:459.83000000000004px;width:69px;height:20.46999999999997px;justify-content:flex-end;padding-right:5.43px;font-size:11.5px;"><span style="transform-origin:100% 50%;transform:scaleX(0.71);letter-spacing:0.8px;">2,419</span></div>
<div class="c" style="left:728px;top:459.83000000000004px;width:69px;height:20.46999999999997px;justify-content:flex-end;padding-right:3.43px;color:#3a3ab0;font-size:11.5px;"><span style="transform-origin:100% 50%;transform:scaleX(0.71);letter-spacing:0.8px;"><span style='display:inline-block;width:5px;height:1.1px;background:currentColor;vertical-align:middle;margin-right:2px;position:relative;top:-0.5px'></span>0,044</span></div>
</body></html>
